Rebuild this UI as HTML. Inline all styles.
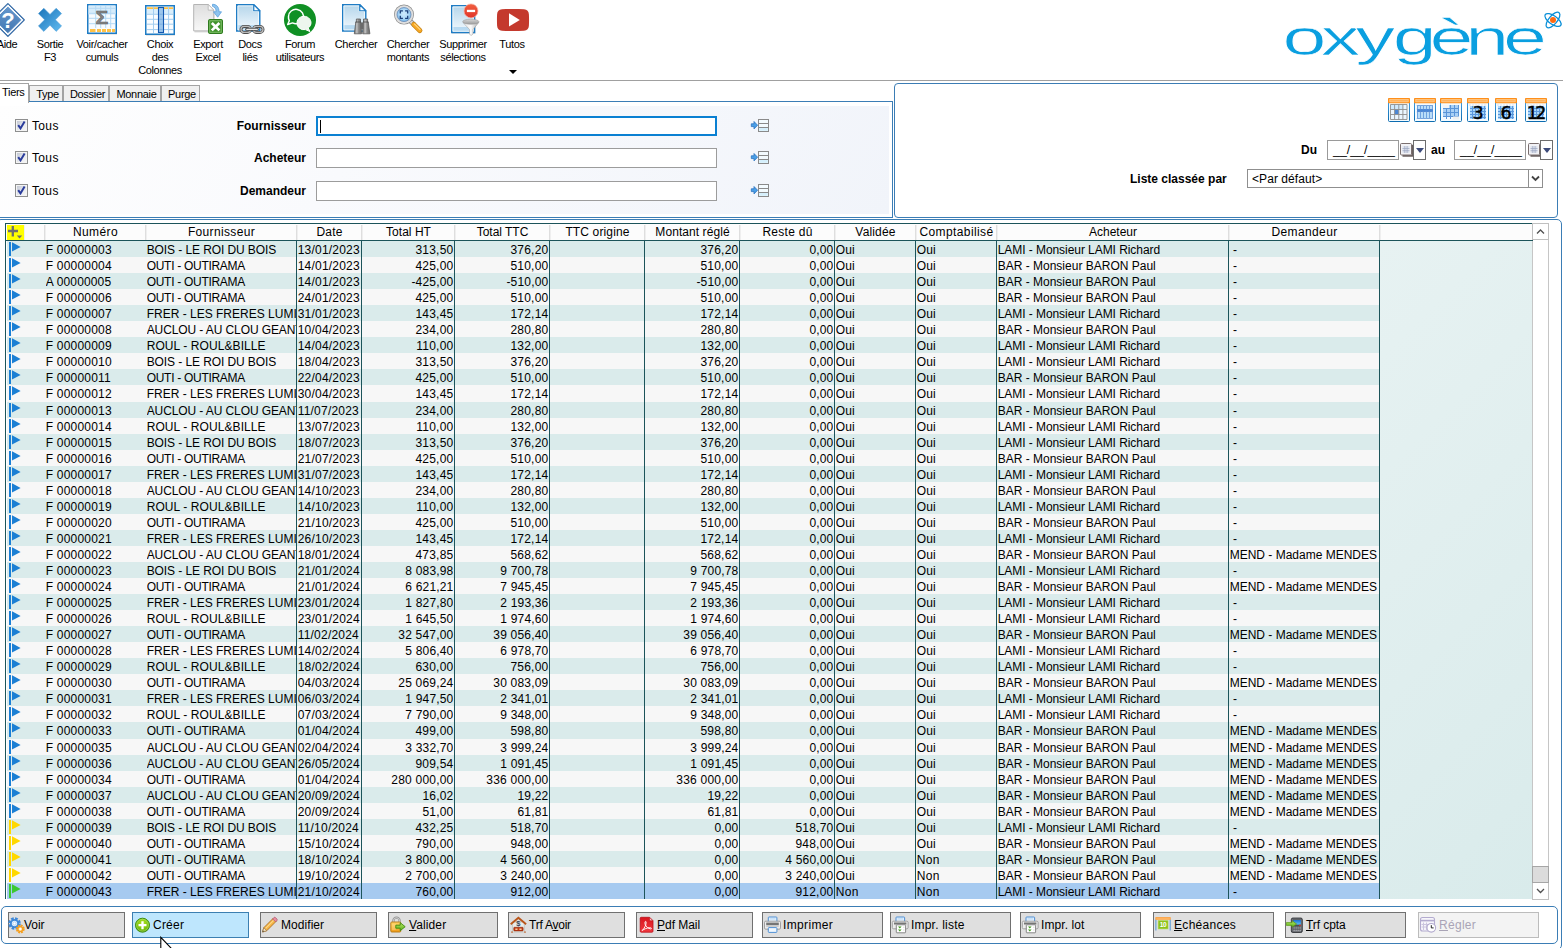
<!DOCTYPE html>
<html lang="fr">
<head>
<meta charset="utf-8">
<title>Oxygène - Factures fournisseurs</title>
<style>
*{box-sizing:border-box;margin:0;padding:0}
html,body{width:1563px;height:948px;overflow:hidden;background:#fff}
body{position:relative;font-family:"Liberation Sans",Arial,sans-serif;font-size:12px;color:#000;line-height:1}
.abs{position:absolute}
/* toolbar */
.tb{position:absolute;top:0;width:90px;text-align:center;font-size:11px;line-height:13px;letter-spacing:-0.35px;color:#000}
.tb svg{display:block;margin:0 auto}
.tb .lb{position:absolute;top:38px;left:0;width:90px}
.topline{position:absolute;left:0;top:80px;width:1563px;height:1px;background:#a0a0a0}
/* tabs */
.tab{position:absolute;top:85px;height:17px;border:1px solid #a3a3a3;border-bottom:none;background:#f0f0f0;font-size:11px;letter-spacing:-0.3px;text-align:center;line-height:17px;padding-left:3px}
.tabsel{position:absolute;left:-2px;top:83px;width:31px;height:20px;border:1px solid #a3a3a3;border-bottom:none;background:#fff;font-size:11px;letter-spacing:-0.3px;line-height:17px;padding-left:3px;z-index:3}
/* left panel */
#lp{position:absolute;left:-2px;top:101px;width:895px;height:117px;border:1px solid #3b7db5;background:#fff}
#lpi{position:absolute;left:0;top:4px;width:890px;height:108px;background:linear-gradient(125deg,#fefefe 0%,#f9fafd 40%,#f1f4fa 100%)}
.cb{position:absolute;left:15px;width:13px;height:13px;border:1px solid #8e8f8f;background:#f4f4f4}
.cb:before{content:"";position:absolute;left:1px;top:1px;width:9px;height:9px;background:linear-gradient(135deg,#c3c8d4,#e9ebef 60%,#f6f6f6)}
.cb svg{position:absolute;left:1px;top:1px}
.tous{position:absolute;left:32px;font-size:12px;letter-spacing:0.35px}
.flab{position:absolute;left:150px;width:156px;text-align:right;font-weight:bold;font-size:12px}
.inp{position:absolute;left:316px;width:401px;height:20px;border:1px solid #9c9c9c;background:#fff}
.inp.foc{border:2px solid #0a80d2}
.lk{position:absolute;left:750px}
/* right group */
#rg{position:absolute;left:894px;top:83px;width:664px;height:135px;border:1px solid #3b7db5;border-radius:4px;background:#fff}
.cal{position:absolute;top:98px;width:22px;height:24px}
.dinp{position:absolute;top:140px;width:72px;height:20px;border:1px solid #9a9a9a;background:#fff;font-size:12.4px;line-height:18px;padding-left:5px;white-space:pre}
.dbtn{position:absolute;top:140px;width:13px;height:20px;border:1px solid #6d6d6d;background:#fff}
.dbtn:after{content:"";position:absolute;left:1.5px;top:7px;border:4px solid transparent;border-top:5px solid #3c4a7a;border-bottom:none}
.bl{position:absolute;font-weight:bold;font-size:12px}
#sel{position:absolute;left:1247px;top:169px;width:296px;height:19px;border:1px solid #8f8f8f;background:#fff;font-size:12px;line-height:19px;padding-left:4px;letter-spacing:0.07px}
#sel i{position:absolute;right:0;top:0;width:14px;height:17px;border-left:1px solid #8f8f8f;background:#fff}
/* table group */
#tg{position:absolute;left:-4px;top:219px;width:1566px;height:731px;border:1px solid #3b7db5;border-radius:5px}
#grid{position:absolute;left:0;top:0;width:1563px;height:948px}
.gh{position:absolute;left:5px;top:223px;width:1528px;height:18px;border-top:1px solid #1c545a;border-bottom:1px solid #1c545a;background:#fcfcfc}
#gl{position:absolute;left:5px;top:223px;width:1px;height:676px;background:#1c545a}
.hc{position:absolute;top:224px;height:16px;line-height:16px;text-align:center;font-size:12px;white-space:nowrap;overflow:hidden}
.hs{position:absolute;top:225px;width:2px;height:15px;background:linear-gradient(90deg,#dedede 50%,#efefef 50%)}
.plus{position:absolute;left:7px;top:225px;width:17px;height:15px}
.r{position:absolute;left:7px;width:1373px;white-space:nowrap}
.r.o{background:#daebeb}
.r.e{background:#f7f7f7}
.r.s{background:#a6caf0}
.r .c{position:absolute;top:0;height:100%;line-height:16px;font-size:12px;overflow:hidden;margin-left:-7px;padding-top:1px}
.r .cr{text-align:right}
.r .fl{position:absolute;left:0;top:0}
.vl{position:absolute;top:241px;width:1px;height:658px;background:#1c545a}
#rest{position:absolute;left:1380px;top:241px;width:152px;height:658px;background:linear-gradient(135deg,#e7f2f2,#d9ebeb)}
/* scrollbar */
#sb{position:absolute;left:1532px;top:223px;width:17px;height:677px;background:#fff;border-left:1px solid #c6c6c6;border-right:1px solid #c6c6c6}
#sbu{position:absolute;left:1532px;top:223px;width:17px;height:17px;border:1px solid #c0c0c0;background:#fff}
#sbd{position:absolute;left:1532px;top:883px;width:17px;height:17px;border:1px solid #c0c0c0;border-top:none;background:#fff}
#sbt{position:absolute;left:1532px;top:866px;width:17px;height:17px;border:1px solid #a6a6a6;background:#dcdcdc}
/* buttons */
#bg{position:absolute;left:1px;top:906px;width:1557px;height:38px;border:1px solid #3b7db5;border-radius:5px;background:#fff}
.btn{position:absolute;top:912px;height:26px;border:1px solid #707070;background:#dfdfdf;font-size:12px;line-height:24px;white-space:nowrap}
.btn svg{position:absolute;left:0px;top:3px}
.btn span{position:absolute;top:0}
.btn.hot{background:#bee6fd;border-color:#3c7fb1}
.btn.dis{background:#f3f3f3;color:#a9a4b6;border-color:#bcbcbc}
u{text-decoration:underline}
</style>
</head>
<body>
<!-- TOOLBAR -->
<div id="toolbar">
<svg class="abs" style="left:0;top:0" width="560" height="80" viewBox="0 0 560 80">
<defs>
<linearGradient id="gb" x1="0" y1="0" x2="0" y2="1"><stop offset="0" stop-color="#6396cc"/><stop offset="1" stop-color="#4478b2"/></linearGradient>
<linearGradient id="gx" x1="0" y1="0" x2="1" y2="1"><stop offset="0" stop-color="#1b74b9"/><stop offset="1" stop-color="#62bbf0"/></linearGradient>
<linearGradient id="gp" x1="0" y1="0" x2="0" y2="1"><stop offset="0" stop-color="#b4d5ea"/><stop offset="0.78" stop-color="#e6f2fa"/><stop offset="0.79" stop-color="#b6d9f1"/><stop offset="1" stop-color="#bcdcf2"/></linearGradient>
<linearGradient id="gg" x1="0" y1="0" x2="0" y2="1"><stop offset="0" stop-color="#dedede"/><stop offset="1" stop-color="#f8f8f8"/></linearGradient>
<radialGradient id="gl2" cx="0.5" cy="0.45" r="0.6"><stop offset="0" stop-color="#cfeafc"/><stop offset="0.6" stop-color="#a9d6f7"/><stop offset="1" stop-color="#5fa6e0"/></radialGradient>
<linearGradient id="gbin" x1="0" y1="0" x2="1" y2="0"><stop offset="0" stop-color="#6e6e6e"/><stop offset="0.35" stop-color="#c4c4c4"/><stop offset="0.6" stop-color="#8a8a8a"/><stop offset="1" stop-color="#6a6a6a"/></linearGradient>
<linearGradient id="gfun" x1="0" y1="0" x2="1" y2="0"><stop offset="0" stop-color="#e8e8e8"/><stop offset="0.5" stop-color="#fafafa"/><stop offset="1" stop-color="#a8a8a8"/></linearGradient>
<linearGradient id="gfun2" x1="0" y1="0" x2="0" y2="1"><stop offset="0" stop-color="#d8d8d8"/><stop offset="1" stop-color="#9c9c9c"/></linearGradient>
<linearGradient id="gred" x1="0" y1="0" x2="0" y2="1"><stop offset="0" stop-color="#f2603f"/><stop offset="1" stop-color="#df352b"/></linearGradient>
</defs>
<!-- Aide -->
<g transform="translate(7.9,19.9)">
<path d="M0-16.2L16.200 0 0 16.2-16.200 0z" fill="#3f72ab" stroke="#3f72ab" stroke-width="1.5" stroke-linejoin="round"/>
<path d="M0-15L15 0 0 15-15 0z" fill="#f4f8fc" stroke="#f4f8fc" stroke-width="1" stroke-linejoin="round"/>
<path d="M0-12.800L12.800 0 0 12.800-12.800 0z" fill="url(#gb)" stroke="url(#gb)" stroke-width="1" stroke-linejoin="round"/>
<text x="0" y="8" text-anchor="middle" font-family="Liberation Sans, Arial, sans-serif" font-weight="bold" font-size="22" fill="#fff">?</text>
</g>
<!-- Sortie X -->
<g transform="translate(50,19.800)">
<path d="M-11.600-6.200L-6.200-11.600 0-5.400 6.200-11.600 11.600-6.200 5.400 0 11.600 6.200 6.200 11.600 0 5.400-6.200 11.600-11.600 6.200-5.400 0z" fill="url(#gx)" stroke="#4a9bd6" stroke-width="0.500" stroke-linejoin="round"/>
</g>
<!-- Voir/cacher cumuls -->
<g transform="translate(87,4)">
<rect x="1" y="1.500" width="29" height="29.500" fill="#d9d9d9" opacity="0.6"/>
<rect x="0.750" y="0.750" width="28.500" height="28.500" fill="#f7fbfe" stroke="#1f7cc4" stroke-width="1.500"/>
<rect x="1.500" y="1.500" width="27" height="9" fill="#d6ecfb"/>
<path d="M2 4.300h26M2 9.300h26M2 14.300h26M2 19.700h26M8.700 2v22M13.700 2v22M18.700 2v22M23.700 2v22" stroke="#b3d9f5" stroke-width="1" fill="none"/>
<path d="M3 25h5.500v3h-5.500zM10 25h4v3h-4zM15 25h4v3h-4zM20 25h4v3h-4zM25 25h3v3h-3z" fill="#ffc144"/>
<text x="14.800" y="20.300" text-anchor="middle" font-family="Liberation Sans, Arial, sans-serif" font-weight="bold" font-size="18.500" fill="#858585" stroke="#555" stroke-width="0.45" transform="translate(-2.2,0) scale(1.15,1)">Σ</text>
</g>
<!-- Choix des colonnes -->
<g transform="translate(145,5)">
<rect x="1" y="1.500" width="29" height="29.500" fill="#d9d9d9" opacity="0.6"/>
<rect x="0.750" y="0.750" width="28.500" height="28.500" fill="#fbfdff" stroke="#1f7cc4" stroke-width="1.500"/>
<rect x="2" y="4" width="26" height="5" fill="#d9eefc"/>
<path d="M2 9.300h26M2 14.300h26M2 19.200h26M2 24.600h26M8.500 2v26M23.600 2v26" stroke="#a3cdf0" stroke-width="1" fill="none"/>
<path d="M2 2.200h6v1.800h-6zM9 2.200h4v1.800h-4zM19 2.200h4v1.800h-4zM24 2.200h4v1.800h-4z" fill="#ffc144"/>
<rect x="13.500" y="2.500" width="5" height="25" fill="#9cc6ec" stroke="#1458b0" stroke-width="1.100"/>
<path d="M14.200 9.300h3.600M14.200 14.300h3.600M14.200 19.200h3.600M14.200 24.600h3.600" stroke="#7fb0e2" stroke-width="1"/>
</g>
<!-- Export Excel -->
<g transform="translate(193,4)">
<path d="M1.500 1.500h14l6 6v21h-20z" fill="#cfcfcf" opacity="0.700"/>
<path d="M0.700 0.500h14.500l5.600 5.600v20.800H0.700z" fill="url(#gg)" stroke="#b4b4b4" stroke-width="1"/>
<path d="M15.200 0.500v5.600h5.600z" fill="#fbfbfb" stroke="#b4b4b4" stroke-width="0.800"/>
<path d="M19.500 0.300c4 0 6.500 2.500 6.500 7.500h2.500l-3.800 5.400-4.200-5.400h2.600c0-3-1.200-4.800-3.600-5.500z" fill="#8ec3ee" stroke="#5a9fdc" stroke-width="0.800"/>
<rect x="15.500" y="15.500" width="14" height="14" rx="1.200" fill="#3f922b" stroke="#2f7a1f"/>
<rect x="16.800" y="16.800" width="11.400" height="11.400" fill="none" stroke="#8fcb7a" stroke-width="0.800"/>
<path d="M18.800 19l7.600 7.400M26.400 19l-7.600 7.400" stroke="#fff" stroke-width="2.700"/>
</g>
<!-- Docs liés -->
<g transform="translate(236,4)">
<path d="M0.750 0.750h17l6 6v20.300H0.750z" fill="url(#gp)" stroke="#1f7cc4" stroke-width="1.500"/>
<path d="M1.900 1.900h15.300v5.500h5.400v18.500H1.900z" fill="none" stroke="#f3f9fd" stroke-width="0.900"/>
<path d="M17.750 0.750v6h6z" fill="#fff" stroke="#1f7cc4" stroke-width="1.200" stroke-linejoin="round"/>
<g fill="none" stroke="#4e4e4e" stroke-width="3">
<rect x="5" y="22.400" width="9.500" height="6" rx="3"/>
<rect x="17.500" y="22.400" width="9.500" height="6" rx="3"/>
</g>
<g fill="none" stroke="#b9b9b9" stroke-width="1.300">
<rect x="5" y="22.400" width="9.500" height="6" rx="3"/>
<rect x="17.500" y="22.400" width="9.500" height="6" rx="3"/>
</g>
<path d="M10.500 25.400h11" stroke="#4e4e4e" stroke-width="2.800" stroke-linecap="round"/>
<path d="M10.800 25.400h10.400" stroke="#e6e6e6" stroke-width="1.100" stroke-linecap="round"/>
</g>
<!-- Forum -->
<g transform="translate(300,20)">
<circle r="16" fill="#109024"/>
<path d="M-11.500-3.500a7.500 7.200 0 1 1 4 6.400l-4.800 1.600 1.600-3.800a7 7 0 0 1-0.800-4.200z" fill="none" stroke="#fff" stroke-width="1.500" stroke-linejoin="round"/>
<path d="M-3 2.800a7 6.500 0 1 1 11.200 5.200l1.800 3.600-4.600-2a7 6.500 0 0 1-8.400-6.800z" fill="#edf6ee" stroke="#fff" stroke-width="1"/>
</g>
<!-- Chercher -->
<g transform="translate(342,4)">
<path d="M0.750 0.750h17l6 6v20.300H0.750z" fill="url(#gp)" stroke="#1f7cc4" stroke-width="1.500"/>
<path d="M1.900 1.900h15.300v5.500h5.400v18.500H1.900z" fill="none" stroke="#f3f9fd" stroke-width="0.900"/>
<path d="M17.750 0.750v6h6z" fill="#fff" stroke="#1f7cc4" stroke-width="1.200" stroke-linejoin="round"/>
<g stroke="#5a5a5a" stroke-width="0.800">
<path d="M14.400 15h4.100v3h0.600l0.400 11.800h-7.200l1.500-11.800h0.600z" fill="url(#gbin)"/>
<path d="M21.500 15h4.100v3h0.600l1.700 11.800h-7.200l0.200-11.800h0.600z" fill="url(#gbin)"/>
<rect x="18.500" y="19" width="3" height="6" fill="#6a6a6a" stroke="none"/>
<path d="M13.500 18h5.500M21 18h5.500" stroke="#4a4a4a"/>
</g>
</g>
<!-- Chercher montants -->
<g transform="translate(393,4)">
<path d="M17.300 17l4 4" stroke="#8e8e8e" stroke-width="4.600" stroke-linecap="butt"/>
<path d="M17.300 17l4 4" stroke="#dadada" stroke-width="3" stroke-linecap="butt"/>
<path d="M20.800 20.500l6 6" stroke="#c5841a" stroke-width="5.200" stroke-linecap="round"/>
<path d="M20.800 20.500l6 6" stroke="#f7a823" stroke-width="3.800" stroke-linecap="round"/>
<path d="M21.500 20l5.500 5.500" stroke="#ffd27a" stroke-width="1.100" stroke-linecap="round"/>
<circle cx="11" cy="10.600" r="10" fill="#8a8a8a"/>
<circle cx="11" cy="10.600" r="9.300" fill="#dedede"/>
<circle cx="11" cy="10.600" r="7" fill="url(#gl2)" stroke="#6f93bd" stroke-width="0.900"/>
<path d="M7.300 9.400v-2.600h2.600M12.100 6.800h2.600v2.600M14.700 11.800v2.600h-2.600M9.900 14.400h-2.600v-2.600" fill="none" stroke="#1d3f78" stroke-width="1.300"/>
</g>
<!-- Supprimer sélections -->
<g transform="translate(451,5)">
<rect x="1" y="1.500" width="23.500" height="27.500" fill="#d9d9d9" opacity="0.600"/>
<path d="M0.750 0.750h22.800v26.700H0.750z" fill="url(#gp)" stroke="#1f7cc4" stroke-width="1.500"/>
<path d="M1.900 1.900h20.500v24.400H1.900z" fill="none" stroke="#f3f9fd" stroke-width="0.900"/>
<path d="M12 17.500c3 1 12.800 1 15.800 0l-5.800 7v4.500l-1.300 1.200h-1.200l-1-1.200v-4.500z" fill="url(#gfun)" stroke="#9a9a9a" stroke-width="0.500"/>
<ellipse cx="19.800" cy="16.700" rx="8.100" ry="2.500" fill="url(#gfun2)" stroke="#9a9a9a" stroke-width="0.600"/>
<circle cx="20" cy="5.900" r="7" fill="url(#gred)" stroke="#f8b4a8" stroke-width="0.700"/>
<rect x="15.900" y="4.800" width="8.200" height="2.300" fill="#fff"/>
</g>
<!-- Tutos -->
<g transform="translate(497,9)">
<path d="M5 0.300c7-0.500 15-0.500 22 0c3.200 0.300 4.700 2 4.900 5c0.200 3.600 0.200 7.800 0 11.400c-0.200 3-1.700 4.700-4.900 5c-7 0.500-15 0.500-22 0c-3.200-0.300-4.700-2-4.900-5c-0.200-3.600-0.200-7.800 0-11.400c0.200-3 1.700-4.700 4.900-5z" fill="#c4392d"/>
<path d="M12 4.200l10.800 6.700-10.800 6.500z" fill="#fff"/>
</g>
<path d="M509 70h8l-4 4z" fill="#000"/>
</svg>
<div class="tb" style="left:-38px"><div class="lb">Aide</div></div>
<div class="tb" style="left:5px"><div class="lb">Sortie<br>F3</div></div>
<div class="tb" style="left:57px"><div class="lb">Voir/cacher<br>cumuls</div></div>
<div class="tb" style="left:115px"><div class="lb">Choix<br>des<br>Colonnes</div></div>
<div class="tb" style="left:163px"><div class="lb">Export<br>Excel</div></div>
<div class="tb" style="left:205px"><div class="lb">Docs<br>liés</div></div>
<div class="tb" style="left:255px"><div class="lb">Forum<br>utilisateurs</div></div>
<div class="tb" style="left:311px"><div class="lb">Chercher</div></div>
<div class="tb" style="left:363px"><div class="lb">Chercher<br>montants</div></div>
<div class="tb" style="left:418px"><div class="lb">Supprimer<br>sélections</div></div>
<div class="tb" style="left:467px"><div class="lb">Tutos</div></div>
<!-- logo -->
<svg class="abs" style="left:1270px;top:0" width="293" height="80" viewBox="0 0 293 80">
<text x="0" y="0" transform="translate(12.5,55) scale(1.58,1)" dx="0 0 0.6 2.2 -1 -1.6 -0.3" letter-spacing="-3.6" font-family="Liberation Sans, Arial, sans-serif" font-size="50" fill="#0a9fe0" stroke="#fff" stroke-width="0.7">oxygène</text>
<g transform="translate(283,20)" fill="none" stroke="#0a8fd8" stroke-width="1.300">
<ellipse rx="9.500" ry="4.200" transform="rotate(35)"/>
<ellipse rx="9.500" ry="4.200" transform="rotate(-50)"/>
<circle r="3" fill="#ff6a13" stroke="none"/>
</g>
</svg>
</div>
<div class="topline"></div>
<!-- TABS -->
<div class="tabsel">Tiers</div>
<div class="tab" style="left:29px;width:34px">Type</div>
<div class="tab" style="left:63px;width:46px">Dossier</div>
<div class="tab" style="left:109px;width:52px">Monnaie</div>
<div class="tab" style="left:161px;width:39px">Purge</div>
<!-- LEFT PANEL -->
<div id="lp"><div id="lpi"></div></div>
<div class="cb" style="top:119px"><svg width="9" height="9" viewBox="0 0 9 9"><path d="M1.200 4.200l2.300 3.200L7.600 0.600" fill="none" stroke="#2a3c9c" stroke-width="2"/></svg></div>
<div class="cb" style="top:151px"><svg width="9" height="9" viewBox="0 0 9 9"><path d="M1.200 4.200l2.300 3.200L7.600 0.600" fill="none" stroke="#2a3c9c" stroke-width="2"/></svg></div>
<div class="cb" style="top:184px"><svg width="9" height="9" viewBox="0 0 9 9"><path d="M1.200 4.200l2.300 3.200L7.600 0.600" fill="none" stroke="#2a3c9c" stroke-width="2"/></svg></div>
<div class="tous" style="top:120px">Tous</div>
<div class="tous" style="top:152px">Tous</div>
<div class="tous" style="top:185px">Tous</div>
<div class="flab" style="top:120px">Fournisseur</div>
<div class="flab" style="top:152px">Acheteur</div>
<div class="flab" style="top:185px">Demandeur</div>
<div class="inp foc" style="top:116px"><div style="position:absolute;left:2px;top:2px;width:1px;height:13px;background:#000"></div></div>
<div class="inp" style="top:148px"></div>
<div class="inp" style="top:181px"></div>
<svg class="lk" style="top:119px" width="20" height="14" viewBox="0 0 20 14"><use href="#lkicon"/></svg>
<svg class="lk" style="top:151px" width="20" height="14" viewBox="0 0 20 14"><use href="#lkicon"/></svg>
<svg class="lk" style="top:184px" width="20" height="14" viewBox="0 0 20 14"><use href="#lkicon"/></svg>
<svg width="0" height="0" style="position:absolute"><defs>
<g id="lkicon"><rect x="8.5" y="0.5" width="10" height="12" fill="#f4fbff" stroke="#8a8a8a"/><rect x="9.2" y="8.700" width="8.6" height="3.100" fill="#d5effc"/><path d="M9 4.500h9M9 8.500h9" stroke="#8a8a8a" stroke-width="1"/><path d="M1.300 4.800h2.700v-2.300l3.600 3.700-3.600 3.700v-2.300h-2.700z" fill="#4b9fe6" stroke="#2a72c0" stroke-width="0.800" stroke-linejoin="round"/></g>
<g id="calbase"><rect x="0.500" y="0.500" width="21" height="23" rx="1" fill="#f4fbff" stroke="url(#calb)"/><rect x="0" y="0" width="22" height="5.200" rx="1" fill="#ff8f1a"/><rect x="1.800" y="1.500" width="18.400" height="2.400" fill="#ffb25c" stroke="#ffd9a8" stroke-width="0.600"/></g><linearGradient id="calb" x1="0" y1="0" x2="0" y2="1"><stop offset="0" stop-color="#4aa3e6"/><stop offset="1" stop-color="#0c6cb0"/></linearGradient>
<g id="calgrid"><rect x="3" y="8" width="16" height="13" fill="#a9d6fa"/><path d="M3 10.500h16M3 13.500h16M3 16.500h16M3 19.500h16M5.500 8v13M8.500 8v13M11.500 8v13M14.500 8v13M17.500 8v13" stroke="#5b97dc" stroke-width="1" fill="none"/><path d="M2.500 7h17" stroke="#a9a9c9" stroke-width="0.600" stroke-dasharray="1 2"/></g>
<g id="calsm"><path d="M2.500 14.800h10v-11" fill="none" stroke="#6a6060" stroke-width="1.800"/><rect x="0.500" y="2.500" width="11" height="11.500" rx="1" fill="#f2f2f6" stroke="#7a6f6f"/><rect x="2.500" y="5" width="7" height="7" fill="#dfe3ee"/><path d="M2.500 7.500h7M2.500 9.700h7M4.800 5v7M7.100 5v7" stroke="#9aa3bf" stroke-width="0.700"/></g>
</defs></svg>
<!-- RIGHT GROUP -->
<div id="rg"></div>
<svg class="cal" style="left:1388px" viewBox="0 0 22 24"><use href="#calbase"/><rect x="2.500" y="6.500" width="16.500" height="15" fill="#eaf6ff"/><rect x="2.500" y="6.500" width="12.500" height="5" fill="#cfe9fd"/><rect x="6.600" y="11.500" width="4.200" height="5" fill="#4a87d6"/><path d="M2.500 6.500h16.500v15h-16.500zM2.500 11.500h16.500M2.500 16.500h16.500M6.600 6.500v15M10.800 6.500v15M14.900 6.500v15" stroke="#8e8e8e" stroke-width="0.900" fill="none"/></svg>
<svg class="cal" style="left:1414px" viewBox="0 0 22 24"><use href="#calbase"/><rect x="3" y="7" width="16" height="14" fill="#6fa3df"/><path d="M5 8v12M8 8v12M11 8v12M14 8v12M17 8v12" stroke="#cdebff" stroke-width="1.600"/><rect x="3" y="11" width="16" height="3" fill="#4a87d6"/><path d="M2.500 7.500h17M2.500 11h17M2.500 14h17M2.500 20.500h17" stroke="#a9a9c9" stroke-width="0.500" stroke-dasharray="1 2"/></svg>
<svg class="cal" style="left:1440px" viewBox="0 0 22 24"><use href="#calbase"/><rect x="3" y="10" width="16" height="9" fill="#a9d0f5"/><rect x="9" y="7" width="10" height="4" fill="#a9d0f5"/><path d="M3 10.500h16M3 14.500h16M3 18.500h16M6.500 7v14M10.500 7v14M14.500 7v14M18.500 7v14" stroke="#5b95d8" stroke-width="1" fill="none"/><rect x="3" y="7" width="6" height="3" fill="#f4f4f4"/><rect x="13" y="18.500" width="6" height="3" fill="#f0f0f0"/></svg>
<svg class="cal" style="left:1467px" viewBox="0 0 22 24"><use href="#calbase"/><use href="#calgrid"/><text x="11" y="20.800" text-anchor="middle" font-family="DejaVu Sans, Liberation Sans, sans-serif" font-size="17.500" fill="#000" stroke="#000" stroke-width="0.450">3</text></svg>
<svg class="cal" style="left:1495px" viewBox="0 0 22 24"><use href="#calbase"/><use href="#calgrid"/><text x="11" y="20.800" text-anchor="middle" font-family="DejaVu Sans, Liberation Sans, sans-serif" font-size="17.500" fill="#000" stroke="#000" stroke-width="0.450">6</text></svg>
<svg class="cal" style="left:1525px" viewBox="0 0 22 24"><use href="#calbase"/><use href="#calgrid"/><text x="10.300" y="20.800" text-anchor="middle" font-family="DejaVu Sans, Liberation Sans, sans-serif" font-size="17.500" letter-spacing="-2.600" fill="#000" stroke="#000" stroke-width="0.400">12</text></svg>
<div class="bl" style="left:1301px;top:144px">Du</div>
<div class="dinp" style="left:1327px">__/__/____</div>
<svg class="abs" style="left:1400px;top:141px" width="14" height="18" viewBox="0 0 14 18"><use href="#calsm"/></svg>
<div class="dbtn" style="left:1413px"></div>
<div class="bl" style="left:1431px;top:144px">au</div>
<div class="dinp" style="left:1454px">__/__/____</div>
<svg class="abs" style="left:1528px;top:141px" width="14" height="18" viewBox="0 0 14 18"><use href="#calsm"/></svg>
<div class="dbtn" style="left:1540px"></div>
<div class="bl" style="left:1130px;top:173px">Liste classée par</div>
<div id="sel">&lt;Par défaut&gt;<i><svg width="13" height="17" viewBox="0 0 13 17"><path d="M3 6.500l3.500 3.500L10 6.500" fill="none" stroke="#444" stroke-width="1.800"/></svg></i></div>
<!-- TABLE GROUP -->
<div id="tg"></div>
<div id="rest"></div>
<div id="sb"></div>
<div id="grid">
<div class="gh"></div>
<div class="hc" style="left:46px;width:99px;letter-spacing:0.41px">Numéro</div>
<div class="hc" style="left:147px;width:149px;letter-spacing:0.35px">Fournisseur</div>
<div class="hc" style="left:298px;width:63px;letter-spacing:0.18px">Date</div>
<div class="hc" style="left:363px;width:91px;letter-spacing:0.02px">Total HT</div>
<div class="hc" style="left:456px;width:93px;letter-spacing:-0.02px">Total TTC</div>
<div class="hc" style="left:551px;width:93px;letter-spacing:0.14px">TTC origine</div>
<div class="hc" style="left:646px;width:93px;letter-spacing:0.07px">Montant réglé</div>
<div class="hc" style="left:741px;width:93px;letter-spacing:0.27px">Reste dû</div>
<div class="hc" style="left:836px;width:79px;letter-spacing:0.16px">Validée</div>
<div class="hc" style="left:917px;width:79px;letter-spacing:0.40px">Comptabilisé</div>
<div class="hc" style="left:998px;width:230px;letter-spacing:0.01px">Acheteur</div>
<div class="hc" style="left:1230px;width:149px;letter-spacing:0.39px">Demandeur</div>
<div class="hs" style="left:44px"></div>
<div class="hs" style="left:145px"></div>
<div class="hs" style="left:296px"></div>
<div class="hs" style="left:361px"></div>
<div class="hs" style="left:454px"></div>
<div class="hs" style="left:549px"></div>
<div class="hs" style="left:644px"></div>
<div class="hs" style="left:739px"></div>
<div class="hs" style="left:834px"></div>
<div class="hs" style="left:915px"></div>
<div class="hs" style="left:996px"></div>
<div class="hs" style="left:1228px"></div>
<div class="hs" style="left:1379px"></div>
<div class="hs" style="left:24px;width:1px"></div>
<div class="plus"><svg width="17" height="15" viewBox="0 0 17 15"><rect width="17" height="15" fill="#ffff00"/><path d="M1 6h10M5.800 1v10.500" stroke="#6e6e6e" stroke-width="2.300" fill="none"/><path d="M9.800 10.500h5.400l-2.700 2.900z" fill="#6e6e6e"/></svg></div>
<div class="r o" style="top:241px;height:16px">
<svg class="fl" width="14" height="16" viewBox="0 0 14 16"><rect x="2" y="1" width="2" height="14" fill="#1b7fd4"/><path d="M5 1.2L13.6 6 5 10.6z" fill="#1b7fd4"/></svg>
<span class="c" style="left:45.7px;width:99.3px;letter-spacing:0.21px">F 00000003</span>
<span class="c" style="left:146.7px;width:149.3px;letter-spacing:-0.09px">BOIS - LE ROI DU BOIS</span>
<span class="c" style="left:297.7px;width:63.3px;letter-spacing:0.21px">13/01/2023</span>
<span class="c cr" style="left:362px;width:91.54px;letter-spacing:0.24px">313,50</span>
<span class="c cr" style="left:455px;width:93.54px;letter-spacing:0.24px">376,20</span>
<span class="c cr" style="left:645px;width:93.54px;letter-spacing:0.24px">376,20</span>
<span class="c cr" style="left:740px;width:93.48px;letter-spacing:0.18px">0,00</span>
<span class="c" style="left:835.7px;width:79.3px;letter-spacing:0.13px">Oui</span>
<span class="c" style="left:916.7px;width:79.3px;letter-spacing:0.13px">Oui</span>
<span class="c" style="left:997.7px;width:230.3px;letter-spacing:-0.06px">LAMI - Monsieur LAMI Richard</span>
<span class="c" style="left:1233.0px;width:146.0px">-</span>
</div>
<div class="r e" style="top:257px;height:16px">
<svg class="fl" width="14" height="16" viewBox="0 0 14 16"><rect x="2" y="1" width="2" height="14" fill="#1b7fd4"/><path d="M5 1.2L13.6 6 5 10.6z" fill="#1b7fd4"/></svg>
<span class="c" style="left:45.7px;width:99.3px;letter-spacing:0.21px">F 00000004</span>
<span class="c" style="left:146.7px;width:149.3px;letter-spacing:-0.29px">OUTI - OUTIRAMA</span>
<span class="c" style="left:297.7px;width:63.3px;letter-spacing:0.21px">14/01/2023</span>
<span class="c cr" style="left:362px;width:91.54px;letter-spacing:0.24px">425,00</span>
<span class="c cr" style="left:455px;width:93.54px;letter-spacing:0.24px">510,00</span>
<span class="c cr" style="left:645px;width:93.54px;letter-spacing:0.24px">510,00</span>
<span class="c cr" style="left:740px;width:93.48px;letter-spacing:0.18px">0,00</span>
<span class="c" style="left:835.7px;width:79.3px;letter-spacing:0.13px">Oui</span>
<span class="c" style="left:916.7px;width:79.3px;letter-spacing:0.13px">Oui</span>
<span class="c" style="left:997.7px;width:230.3px">BAR - Monsieur BARON Paul</span>
<span class="c" style="left:1233.0px;width:146.0px">-</span>
</div>
<div class="r o" style="top:273px;height:16px">
<svg class="fl" width="14" height="16" viewBox="0 0 14 16"><rect x="2" y="1" width="2" height="14" fill="#1b7fd4"/><path d="M5 1.2L13.6 6 5 10.6z" fill="#1b7fd4"/></svg>
<span class="c" style="left:45.7px;width:99.3px;letter-spacing:0.15px">A 00000005</span>
<span class="c" style="left:146.7px;width:149.3px;letter-spacing:-0.29px">OUTI - OUTIRAMA</span>
<span class="c" style="left:297.7px;width:63.3px;letter-spacing:0.21px">14/01/2023</span>
<span class="c cr" style="left:362px;width:91.50px;letter-spacing:0.20px">-425,00</span>
<span class="c cr" style="left:455px;width:93.50px;letter-spacing:0.20px">-510,00</span>
<span class="c cr" style="left:645px;width:93.50px;letter-spacing:0.20px">-510,00</span>
<span class="c cr" style="left:740px;width:93.48px;letter-spacing:0.18px">0,00</span>
<span class="c" style="left:835.7px;width:79.3px;letter-spacing:0.13px">Oui</span>
<span class="c" style="left:916.7px;width:79.3px;letter-spacing:0.13px">Oui</span>
<span class="c" style="left:997.7px;width:230.3px">BAR - Monsieur BARON Paul</span>
<span class="c" style="left:1233.0px;width:146.0px">-</span>
</div>
<div class="r e" style="top:289px;height:16px">
<svg class="fl" width="14" height="16" viewBox="0 0 14 16"><rect x="2" y="1" width="2" height="14" fill="#1b7fd4"/><path d="M5 1.2L13.6 6 5 10.6z" fill="#1b7fd4"/></svg>
<span class="c" style="left:45.7px;width:99.3px;letter-spacing:0.21px">F 00000006</span>
<span class="c" style="left:146.7px;width:149.3px;letter-spacing:-0.29px">OUTI - OUTIRAMA</span>
<span class="c" style="left:297.7px;width:63.3px;letter-spacing:0.21px">24/01/2023</span>
<span class="c cr" style="left:362px;width:91.54px;letter-spacing:0.24px">425,00</span>
<span class="c cr" style="left:455px;width:93.54px;letter-spacing:0.24px">510,00</span>
<span class="c cr" style="left:645px;width:93.54px;letter-spacing:0.24px">510,00</span>
<span class="c cr" style="left:740px;width:93.48px;letter-spacing:0.18px">0,00</span>
<span class="c" style="left:835.7px;width:79.3px;letter-spacing:0.13px">Oui</span>
<span class="c" style="left:916.7px;width:79.3px;letter-spacing:0.13px">Oui</span>
<span class="c" style="left:997.7px;width:230.3px">BAR - Monsieur BARON Paul</span>
<span class="c" style="left:1233.0px;width:146.0px">-</span>
</div>
<div class="r o" style="top:305px;height:16px">
<svg class="fl" width="14" height="16" viewBox="0 0 14 16"><rect x="2" y="1" width="2" height="14" fill="#1b7fd4"/><path d="M5 1.2L13.6 6 5 10.6z" fill="#1b7fd4"/></svg>
<span class="c" style="left:45.7px;width:99.3px;letter-spacing:0.21px">F 00000007</span>
<span class="c" style="left:146.7px;width:149.3px">FRER - LES FRERES LUMIERE</span>
<span class="c" style="left:297.7px;width:63.3px;letter-spacing:0.21px">31/01/2023</span>
<span class="c cr" style="left:362px;width:91.54px;letter-spacing:0.24px">143,45</span>
<span class="c cr" style="left:455px;width:93.54px;letter-spacing:0.24px">172,14</span>
<span class="c cr" style="left:645px;width:93.54px;letter-spacing:0.24px">172,14</span>
<span class="c cr" style="left:740px;width:93.48px;letter-spacing:0.18px">0,00</span>
<span class="c" style="left:835.7px;width:79.3px;letter-spacing:0.13px">Oui</span>
<span class="c" style="left:916.7px;width:79.3px;letter-spacing:0.13px">Oui</span>
<span class="c" style="left:997.7px;width:230.3px;letter-spacing:-0.06px">LAMI - Monsieur LAMI Richard</span>
<span class="c" style="left:1233.0px;width:146.0px">-</span>
</div>
<div class="r e" style="top:321px;height:16px">
<svg class="fl" width="14" height="16" viewBox="0 0 14 16"><rect x="2" y="1" width="2" height="14" fill="#1b7fd4"/><path d="M5 1.2L13.6 6 5 10.6z" fill="#1b7fd4"/></svg>
<span class="c" style="left:45.7px;width:99.3px;letter-spacing:0.21px">F 00000008</span>
<span class="c" style="left:146.7px;width:149.3px;letter-spacing:-0.10px">AUCLOU - AU CLOU GEANT</span>
<span class="c" style="left:297.7px;width:63.3px;letter-spacing:0.21px">10/04/2023</span>
<span class="c cr" style="left:362px;width:91.54px;letter-spacing:0.24px">234,00</span>
<span class="c cr" style="left:455px;width:93.54px;letter-spacing:0.24px">280,80</span>
<span class="c cr" style="left:645px;width:93.54px;letter-spacing:0.24px">280,80</span>
<span class="c cr" style="left:740px;width:93.48px;letter-spacing:0.18px">0,00</span>
<span class="c" style="left:835.7px;width:79.3px;letter-spacing:0.13px">Oui</span>
<span class="c" style="left:916.7px;width:79.3px;letter-spacing:0.13px">Oui</span>
<span class="c" style="left:997.7px;width:230.3px">BAR - Monsieur BARON Paul</span>
<span class="c" style="left:1233.0px;width:146.0px">-</span>
</div>
<div class="r o" style="top:337px;height:16px">
<svg class="fl" width="14" height="16" viewBox="0 0 14 16"><rect x="2" y="1" width="2" height="14" fill="#1b7fd4"/><path d="M5 1.2L13.6 6 5 10.6z" fill="#1b7fd4"/></svg>
<span class="c" style="left:45.7px;width:99.3px;letter-spacing:0.21px">F 00000009</span>
<span class="c" style="left:146.7px;width:149.3px;letter-spacing:0.08px">ROUL - ROUL&amp;BILLE</span>
<span class="c" style="left:297.7px;width:63.3px;letter-spacing:0.21px">14/04/2023</span>
<span class="c cr" style="left:362px;width:91.54px;letter-spacing:0.24px">110,00</span>
<span class="c cr" style="left:455px;width:93.54px;letter-spacing:0.24px">132,00</span>
<span class="c cr" style="left:645px;width:93.54px;letter-spacing:0.24px">132,00</span>
<span class="c cr" style="left:740px;width:93.48px;letter-spacing:0.18px">0,00</span>
<span class="c" style="left:835.7px;width:79.3px;letter-spacing:0.13px">Oui</span>
<span class="c" style="left:916.7px;width:79.3px;letter-spacing:0.13px">Oui</span>
<span class="c" style="left:997.7px;width:230.3px;letter-spacing:-0.06px">LAMI - Monsieur LAMI Richard</span>
<span class="c" style="left:1233.0px;width:146.0px">-</span>
</div>
<div class="r e" style="top:353px;height:16px">
<svg class="fl" width="14" height="16" viewBox="0 0 14 16"><rect x="2" y="1" width="2" height="14" fill="#1b7fd4"/><path d="M5 1.2L13.6 6 5 10.6z" fill="#1b7fd4"/></svg>
<span class="c" style="left:45.7px;width:99.3px;letter-spacing:0.21px">F 00000010</span>
<span class="c" style="left:146.7px;width:149.3px;letter-spacing:-0.09px">BOIS - LE ROI DU BOIS</span>
<span class="c" style="left:297.7px;width:63.3px;letter-spacing:0.21px">18/04/2023</span>
<span class="c cr" style="left:362px;width:91.54px;letter-spacing:0.24px">313,50</span>
<span class="c cr" style="left:455px;width:93.54px;letter-spacing:0.24px">376,20</span>
<span class="c cr" style="left:645px;width:93.54px;letter-spacing:0.24px">376,20</span>
<span class="c cr" style="left:740px;width:93.48px;letter-spacing:0.18px">0,00</span>
<span class="c" style="left:835.7px;width:79.3px;letter-spacing:0.13px">Oui</span>
<span class="c" style="left:916.7px;width:79.3px;letter-spacing:0.13px">Oui</span>
<span class="c" style="left:997.7px;width:230.3px;letter-spacing:-0.06px">LAMI - Monsieur LAMI Richard</span>
<span class="c" style="left:1233.0px;width:146.0px">-</span>
</div>
<div class="r o" style="top:369px;height:16px">
<svg class="fl" width="14" height="16" viewBox="0 0 14 16"><rect x="2" y="1" width="2" height="14" fill="#1b7fd4"/><path d="M5 1.2L13.6 6 5 10.6z" fill="#1b7fd4"/></svg>
<span class="c" style="left:45.7px;width:99.3px;letter-spacing:0.21px">F 00000011</span>
<span class="c" style="left:146.7px;width:149.3px;letter-spacing:-0.29px">OUTI - OUTIRAMA</span>
<span class="c" style="left:297.7px;width:63.3px;letter-spacing:0.21px">22/04/2023</span>
<span class="c cr" style="left:362px;width:91.54px;letter-spacing:0.24px">425,00</span>
<span class="c cr" style="left:455px;width:93.54px;letter-spacing:0.24px">510,00</span>
<span class="c cr" style="left:645px;width:93.54px;letter-spacing:0.24px">510,00</span>
<span class="c cr" style="left:740px;width:93.48px;letter-spacing:0.18px">0,00</span>
<span class="c" style="left:835.7px;width:79.3px;letter-spacing:0.13px">Oui</span>
<span class="c" style="left:916.7px;width:79.3px;letter-spacing:0.13px">Oui</span>
<span class="c" style="left:997.7px;width:230.3px">BAR - Monsieur BARON Paul</span>
<span class="c" style="left:1233.0px;width:146.0px">-</span>
</div>
<div class="r e" style="top:385px;height:17px">
<svg class="fl" width="14" height="16" viewBox="0 0 14 16"><rect x="2" y="1" width="2" height="14" fill="#1b7fd4"/><path d="M5 1.2L13.6 6 5 10.6z" fill="#1b7fd4"/></svg>
<span class="c" style="left:45.7px;width:99.3px;letter-spacing:0.21px">F 00000012</span>
<span class="c" style="left:146.7px;width:149.3px">FRER - LES FRERES LUMIERE</span>
<span class="c" style="left:297.7px;width:63.3px;letter-spacing:0.21px">30/04/2023</span>
<span class="c cr" style="left:362px;width:91.54px;letter-spacing:0.24px">143,45</span>
<span class="c cr" style="left:455px;width:93.54px;letter-spacing:0.24px">172,14</span>
<span class="c cr" style="left:645px;width:93.54px;letter-spacing:0.24px">172,14</span>
<span class="c cr" style="left:740px;width:93.48px;letter-spacing:0.18px">0,00</span>
<span class="c" style="left:835.7px;width:79.3px;letter-spacing:0.13px">Oui</span>
<span class="c" style="left:916.7px;width:79.3px;letter-spacing:0.13px">Oui</span>
<span class="c" style="left:997.7px;width:230.3px;letter-spacing:-0.06px">LAMI - Monsieur LAMI Richard</span>
<span class="c" style="left:1233.0px;width:146.0px">-</span>
</div>
<div class="r o" style="top:402px;height:16px">
<svg class="fl" width="14" height="16" viewBox="0 0 14 16"><rect x="2" y="1" width="2" height="14" fill="#1b7fd4"/><path d="M5 1.2L13.6 6 5 10.6z" fill="#1b7fd4"/></svg>
<span class="c" style="left:45.7px;width:99.3px;letter-spacing:0.21px">F 00000013</span>
<span class="c" style="left:146.7px;width:149.3px;letter-spacing:-0.10px">AUCLOU - AU CLOU GEANT</span>
<span class="c" style="left:297.7px;width:63.3px;letter-spacing:0.21px">11/07/2023</span>
<span class="c cr" style="left:362px;width:91.54px;letter-spacing:0.24px">234,00</span>
<span class="c cr" style="left:455px;width:93.54px;letter-spacing:0.24px">280,80</span>
<span class="c cr" style="left:645px;width:93.54px;letter-spacing:0.24px">280,80</span>
<span class="c cr" style="left:740px;width:93.48px;letter-spacing:0.18px">0,00</span>
<span class="c" style="left:835.7px;width:79.3px;letter-spacing:0.13px">Oui</span>
<span class="c" style="left:916.7px;width:79.3px;letter-spacing:0.13px">Oui</span>
<span class="c" style="left:997.7px;width:230.3px">BAR - Monsieur BARON Paul</span>
<span class="c" style="left:1233.0px;width:146.0px">-</span>
</div>
<div class="r e" style="top:418px;height:16px">
<svg class="fl" width="14" height="16" viewBox="0 0 14 16"><rect x="2" y="1" width="2" height="14" fill="#1b7fd4"/><path d="M5 1.2L13.6 6 5 10.6z" fill="#1b7fd4"/></svg>
<span class="c" style="left:45.7px;width:99.3px;letter-spacing:0.21px">F 00000014</span>
<span class="c" style="left:146.7px;width:149.3px;letter-spacing:0.08px">ROUL - ROUL&amp;BILLE</span>
<span class="c" style="left:297.7px;width:63.3px;letter-spacing:0.21px">13/07/2023</span>
<span class="c cr" style="left:362px;width:91.54px;letter-spacing:0.24px">110,00</span>
<span class="c cr" style="left:455px;width:93.54px;letter-spacing:0.24px">132,00</span>
<span class="c cr" style="left:645px;width:93.54px;letter-spacing:0.24px">132,00</span>
<span class="c cr" style="left:740px;width:93.48px;letter-spacing:0.18px">0,00</span>
<span class="c" style="left:835.7px;width:79.3px;letter-spacing:0.13px">Oui</span>
<span class="c" style="left:916.7px;width:79.3px;letter-spacing:0.13px">Oui</span>
<span class="c" style="left:997.7px;width:230.3px;letter-spacing:-0.06px">LAMI - Monsieur LAMI Richard</span>
<span class="c" style="left:1233.0px;width:146.0px">-</span>
</div>
<div class="r o" style="top:434px;height:16px">
<svg class="fl" width="14" height="16" viewBox="0 0 14 16"><rect x="2" y="1" width="2" height="14" fill="#1b7fd4"/><path d="M5 1.2L13.6 6 5 10.6z" fill="#1b7fd4"/></svg>
<span class="c" style="left:45.7px;width:99.3px;letter-spacing:0.21px">F 00000015</span>
<span class="c" style="left:146.7px;width:149.3px;letter-spacing:-0.09px">BOIS - LE ROI DU BOIS</span>
<span class="c" style="left:297.7px;width:63.3px;letter-spacing:0.21px">18/07/2023</span>
<span class="c cr" style="left:362px;width:91.54px;letter-spacing:0.24px">313,50</span>
<span class="c cr" style="left:455px;width:93.54px;letter-spacing:0.24px">376,20</span>
<span class="c cr" style="left:645px;width:93.54px;letter-spacing:0.24px">376,20</span>
<span class="c cr" style="left:740px;width:93.48px;letter-spacing:0.18px">0,00</span>
<span class="c" style="left:835.7px;width:79.3px;letter-spacing:0.13px">Oui</span>
<span class="c" style="left:916.7px;width:79.3px;letter-spacing:0.13px">Oui</span>
<span class="c" style="left:997.7px;width:230.3px;letter-spacing:-0.06px">LAMI - Monsieur LAMI Richard</span>
<span class="c" style="left:1233.0px;width:146.0px">-</span>
</div>
<div class="r e" style="top:450px;height:16px">
<svg class="fl" width="14" height="16" viewBox="0 0 14 16"><rect x="2" y="1" width="2" height="14" fill="#1b7fd4"/><path d="M5 1.2L13.6 6 5 10.6z" fill="#1b7fd4"/></svg>
<span class="c" style="left:45.7px;width:99.3px;letter-spacing:0.21px">F 00000016</span>
<span class="c" style="left:146.7px;width:149.3px;letter-spacing:-0.29px">OUTI - OUTIRAMA</span>
<span class="c" style="left:297.7px;width:63.3px;letter-spacing:0.21px">21/07/2023</span>
<span class="c cr" style="left:362px;width:91.54px;letter-spacing:0.24px">425,00</span>
<span class="c cr" style="left:455px;width:93.54px;letter-spacing:0.24px">510,00</span>
<span class="c cr" style="left:645px;width:93.54px;letter-spacing:0.24px">510,00</span>
<span class="c cr" style="left:740px;width:93.48px;letter-spacing:0.18px">0,00</span>
<span class="c" style="left:835.7px;width:79.3px;letter-spacing:0.13px">Oui</span>
<span class="c" style="left:916.7px;width:79.3px;letter-spacing:0.13px">Oui</span>
<span class="c" style="left:997.7px;width:230.3px">BAR - Monsieur BARON Paul</span>
<span class="c" style="left:1233.0px;width:146.0px">-</span>
</div>
<div class="r o" style="top:466px;height:16px">
<svg class="fl" width="14" height="16" viewBox="0 0 14 16"><rect x="2" y="1" width="2" height="14" fill="#1b7fd4"/><path d="M5 1.2L13.6 6 5 10.6z" fill="#1b7fd4"/></svg>
<span class="c" style="left:45.7px;width:99.3px;letter-spacing:0.21px">F 00000017</span>
<span class="c" style="left:146.7px;width:149.3px">FRER - LES FRERES LUMIERE</span>
<span class="c" style="left:297.7px;width:63.3px;letter-spacing:0.21px">31/07/2023</span>
<span class="c cr" style="left:362px;width:91.54px;letter-spacing:0.24px">143,45</span>
<span class="c cr" style="left:455px;width:93.54px;letter-spacing:0.24px">172,14</span>
<span class="c cr" style="left:645px;width:93.54px;letter-spacing:0.24px">172,14</span>
<span class="c cr" style="left:740px;width:93.48px;letter-spacing:0.18px">0,00</span>
<span class="c" style="left:835.7px;width:79.3px;letter-spacing:0.13px">Oui</span>
<span class="c" style="left:916.7px;width:79.3px;letter-spacing:0.13px">Oui</span>
<span class="c" style="left:997.7px;width:230.3px;letter-spacing:-0.06px">LAMI - Monsieur LAMI Richard</span>
<span class="c" style="left:1233.0px;width:146.0px">-</span>
</div>
<div class="r e" style="top:482px;height:16px">
<svg class="fl" width="14" height="16" viewBox="0 0 14 16"><rect x="2" y="1" width="2" height="14" fill="#1b7fd4"/><path d="M5 1.2L13.6 6 5 10.6z" fill="#1b7fd4"/></svg>
<span class="c" style="left:45.7px;width:99.3px;letter-spacing:0.21px">F 00000018</span>
<span class="c" style="left:146.7px;width:149.3px;letter-spacing:-0.10px">AUCLOU - AU CLOU GEANT</span>
<span class="c" style="left:297.7px;width:63.3px;letter-spacing:0.21px">14/10/2023</span>
<span class="c cr" style="left:362px;width:91.54px;letter-spacing:0.24px">234,00</span>
<span class="c cr" style="left:455px;width:93.54px;letter-spacing:0.24px">280,80</span>
<span class="c cr" style="left:645px;width:93.54px;letter-spacing:0.24px">280,80</span>
<span class="c cr" style="left:740px;width:93.48px;letter-spacing:0.18px">0,00</span>
<span class="c" style="left:835.7px;width:79.3px;letter-spacing:0.13px">Oui</span>
<span class="c" style="left:916.7px;width:79.3px;letter-spacing:0.13px">Oui</span>
<span class="c" style="left:997.7px;width:230.3px">BAR - Monsieur BARON Paul</span>
<span class="c" style="left:1233.0px;width:146.0px">-</span>
</div>
<div class="r o" style="top:498px;height:16px">
<svg class="fl" width="14" height="16" viewBox="0 0 14 16"><rect x="2" y="1" width="2" height="14" fill="#1b7fd4"/><path d="M5 1.2L13.6 6 5 10.6z" fill="#1b7fd4"/></svg>
<span class="c" style="left:45.7px;width:99.3px;letter-spacing:0.21px">F 00000019</span>
<span class="c" style="left:146.7px;width:149.3px;letter-spacing:0.08px">ROUL - ROUL&amp;BILLE</span>
<span class="c" style="left:297.7px;width:63.3px;letter-spacing:0.21px">14/10/2023</span>
<span class="c cr" style="left:362px;width:91.54px;letter-spacing:0.24px">110,00</span>
<span class="c cr" style="left:455px;width:93.54px;letter-spacing:0.24px">132,00</span>
<span class="c cr" style="left:645px;width:93.54px;letter-spacing:0.24px">132,00</span>
<span class="c cr" style="left:740px;width:93.48px;letter-spacing:0.18px">0,00</span>
<span class="c" style="left:835.7px;width:79.3px;letter-spacing:0.13px">Oui</span>
<span class="c" style="left:916.7px;width:79.3px;letter-spacing:0.13px">Oui</span>
<span class="c" style="left:997.7px;width:230.3px;letter-spacing:-0.06px">LAMI - Monsieur LAMI Richard</span>
<span class="c" style="left:1233.0px;width:146.0px">-</span>
</div>
<div class="r e" style="top:514px;height:16px">
<svg class="fl" width="14" height="16" viewBox="0 0 14 16"><rect x="2" y="1" width="2" height="14" fill="#1b7fd4"/><path d="M5 1.2L13.6 6 5 10.6z" fill="#1b7fd4"/></svg>
<span class="c" style="left:45.7px;width:99.3px;letter-spacing:0.21px">F 00000020</span>
<span class="c" style="left:146.7px;width:149.3px;letter-spacing:-0.29px">OUTI - OUTIRAMA</span>
<span class="c" style="left:297.7px;width:63.3px;letter-spacing:0.21px">21/10/2023</span>
<span class="c cr" style="left:362px;width:91.54px;letter-spacing:0.24px">425,00</span>
<span class="c cr" style="left:455px;width:93.54px;letter-spacing:0.24px">510,00</span>
<span class="c cr" style="left:645px;width:93.54px;letter-spacing:0.24px">510,00</span>
<span class="c cr" style="left:740px;width:93.48px;letter-spacing:0.18px">0,00</span>
<span class="c" style="left:835.7px;width:79.3px;letter-spacing:0.13px">Oui</span>
<span class="c" style="left:916.7px;width:79.3px;letter-spacing:0.13px">Oui</span>
<span class="c" style="left:997.7px;width:230.3px">BAR - Monsieur BARON Paul</span>
<span class="c" style="left:1233.0px;width:146.0px">-</span>
</div>
<div class="r o" style="top:530px;height:16px">
<svg class="fl" width="14" height="16" viewBox="0 0 14 16"><rect x="2" y="1" width="2" height="14" fill="#1b7fd4"/><path d="M5 1.2L13.6 6 5 10.6z" fill="#1b7fd4"/></svg>
<span class="c" style="left:45.7px;width:99.3px;letter-spacing:0.21px">F 00000021</span>
<span class="c" style="left:146.7px;width:149.3px">FRER - LES FRERES LUMIERE</span>
<span class="c" style="left:297.7px;width:63.3px;letter-spacing:0.21px">26/10/2023</span>
<span class="c cr" style="left:362px;width:91.54px;letter-spacing:0.24px">143,45</span>
<span class="c cr" style="left:455px;width:93.54px;letter-spacing:0.24px">172,14</span>
<span class="c cr" style="left:645px;width:93.54px;letter-spacing:0.24px">172,14</span>
<span class="c cr" style="left:740px;width:93.48px;letter-spacing:0.18px">0,00</span>
<span class="c" style="left:835.7px;width:79.3px;letter-spacing:0.13px">Oui</span>
<span class="c" style="left:916.7px;width:79.3px;letter-spacing:0.13px">Oui</span>
<span class="c" style="left:997.7px;width:230.3px;letter-spacing:-0.06px">LAMI - Monsieur LAMI Richard</span>
<span class="c" style="left:1233.0px;width:146.0px">-</span>
</div>
<div class="r e" style="top:546px;height:16px">
<svg class="fl" width="14" height="16" viewBox="0 0 14 16"><rect x="2" y="1" width="2" height="14" fill="#1b7fd4"/><path d="M5 1.2L13.6 6 5 10.6z" fill="#1b7fd4"/></svg>
<span class="c" style="left:45.7px;width:99.3px;letter-spacing:0.21px">F 00000022</span>
<span class="c" style="left:146.7px;width:149.3px;letter-spacing:-0.10px">AUCLOU - AU CLOU GEANT</span>
<span class="c" style="left:297.7px;width:63.3px;letter-spacing:0.21px">18/01/2024</span>
<span class="c cr" style="left:362px;width:91.54px;letter-spacing:0.24px">473,85</span>
<span class="c cr" style="left:455px;width:93.54px;letter-spacing:0.24px">568,62</span>
<span class="c cr" style="left:645px;width:93.54px;letter-spacing:0.24px">568,62</span>
<span class="c cr" style="left:740px;width:93.48px;letter-spacing:0.18px">0,00</span>
<span class="c" style="left:835.7px;width:79.3px;letter-spacing:0.13px">Oui</span>
<span class="c" style="left:916.7px;width:79.3px;letter-spacing:0.13px">Oui</span>
<span class="c" style="left:997.7px;width:230.3px">BAR - Monsieur BARON Paul</span>
<span class="c" style="left:1229.7px;width:149.3px">MEND - Madame MENDES</span>
</div>
<div class="r o" style="top:562px;height:16px">
<svg class="fl" width="14" height="16" viewBox="0 0 14 16"><rect x="2" y="1" width="2" height="14" fill="#1b7fd4"/><path d="M5 1.2L13.6 6 5 10.6z" fill="#1b7fd4"/></svg>
<span class="c" style="left:45.7px;width:99.3px;letter-spacing:0.21px">F 00000023</span>
<span class="c" style="left:146.7px;width:149.3px;letter-spacing:-0.09px">BOIS - LE ROI DU BOIS</span>
<span class="c" style="left:297.7px;width:63.3px;letter-spacing:0.21px">21/01/2024</span>
<span class="c cr" style="left:362px;width:91.48px;letter-spacing:0.18px">8 083,98</span>
<span class="c cr" style="left:455px;width:93.48px;letter-spacing:0.18px">9 700,78</span>
<span class="c cr" style="left:645px;width:93.48px;letter-spacing:0.18px">9 700,78</span>
<span class="c cr" style="left:740px;width:93.48px;letter-spacing:0.18px">0,00</span>
<span class="c" style="left:835.7px;width:79.3px;letter-spacing:0.13px">Oui</span>
<span class="c" style="left:916.7px;width:79.3px;letter-spacing:0.13px">Oui</span>
<span class="c" style="left:997.7px;width:230.3px;letter-spacing:-0.06px">LAMI - Monsieur LAMI Richard</span>
<span class="c" style="left:1233.0px;width:146.0px">-</span>
</div>
<div class="r e" style="top:578px;height:16px">
<svg class="fl" width="14" height="16" viewBox="0 0 14 16"><rect x="2" y="1" width="2" height="14" fill="#1b7fd4"/><path d="M5 1.2L13.6 6 5 10.6z" fill="#1b7fd4"/></svg>
<span class="c" style="left:45.7px;width:99.3px;letter-spacing:0.21px">F 00000024</span>
<span class="c" style="left:146.7px;width:149.3px;letter-spacing:-0.29px">OUTI - OUTIRAMA</span>
<span class="c" style="left:297.7px;width:63.3px;letter-spacing:0.21px">21/01/2024</span>
<span class="c cr" style="left:362px;width:91.48px;letter-spacing:0.18px">6 621,21</span>
<span class="c cr" style="left:455px;width:93.48px;letter-spacing:0.18px">7 945,45</span>
<span class="c cr" style="left:645px;width:93.48px;letter-spacing:0.18px">7 945,45</span>
<span class="c cr" style="left:740px;width:93.48px;letter-spacing:0.18px">0,00</span>
<span class="c" style="left:835.7px;width:79.3px;letter-spacing:0.13px">Oui</span>
<span class="c" style="left:916.7px;width:79.3px;letter-spacing:0.13px">Oui</span>
<span class="c" style="left:997.7px;width:230.3px">BAR - Monsieur BARON Paul</span>
<span class="c" style="left:1229.7px;width:149.3px">MEND - Madame MENDES</span>
</div>
<div class="r o" style="top:594px;height:16px">
<svg class="fl" width="14" height="16" viewBox="0 0 14 16"><rect x="2" y="1" width="2" height="14" fill="#1b7fd4"/><path d="M5 1.2L13.6 6 5 10.6z" fill="#1b7fd4"/></svg>
<span class="c" style="left:45.7px;width:99.3px;letter-spacing:0.21px">F 00000025</span>
<span class="c" style="left:146.7px;width:149.3px">FRER - LES FRERES LUMIERE</span>
<span class="c" style="left:297.7px;width:63.3px;letter-spacing:0.21px">23/01/2024</span>
<span class="c cr" style="left:362px;width:91.48px;letter-spacing:0.18px">1 827,80</span>
<span class="c cr" style="left:455px;width:93.48px;letter-spacing:0.18px">2 193,36</span>
<span class="c cr" style="left:645px;width:93.48px;letter-spacing:0.18px">2 193,36</span>
<span class="c cr" style="left:740px;width:93.48px;letter-spacing:0.18px">0,00</span>
<span class="c" style="left:835.7px;width:79.3px;letter-spacing:0.13px">Oui</span>
<span class="c" style="left:916.7px;width:79.3px;letter-spacing:0.13px">Oui</span>
<span class="c" style="left:997.7px;width:230.3px;letter-spacing:-0.06px">LAMI - Monsieur LAMI Richard</span>
<span class="c" style="left:1233.0px;width:146.0px">-</span>
</div>
<div class="r e" style="top:610px;height:16px">
<svg class="fl" width="14" height="16" viewBox="0 0 14 16"><rect x="2" y="1" width="2" height="14" fill="#1b7fd4"/><path d="M5 1.2L13.6 6 5 10.6z" fill="#1b7fd4"/></svg>
<span class="c" style="left:45.7px;width:99.3px;letter-spacing:0.21px">F 00000026</span>
<span class="c" style="left:146.7px;width:149.3px;letter-spacing:0.08px">ROUL - ROUL&amp;BILLE</span>
<span class="c" style="left:297.7px;width:63.3px;letter-spacing:0.21px">23/01/2024</span>
<span class="c cr" style="left:362px;width:91.48px;letter-spacing:0.18px">1 645,50</span>
<span class="c cr" style="left:455px;width:93.48px;letter-spacing:0.18px">1 974,60</span>
<span class="c cr" style="left:645px;width:93.48px;letter-spacing:0.18px">1 974,60</span>
<span class="c cr" style="left:740px;width:93.48px;letter-spacing:0.18px">0,00</span>
<span class="c" style="left:835.7px;width:79.3px;letter-spacing:0.13px">Oui</span>
<span class="c" style="left:916.7px;width:79.3px;letter-spacing:0.13px">Oui</span>
<span class="c" style="left:997.7px;width:230.3px;letter-spacing:-0.06px">LAMI - Monsieur LAMI Richard</span>
<span class="c" style="left:1233.0px;width:146.0px">-</span>
</div>
<div class="r o" style="top:626px;height:16px">
<svg class="fl" width="14" height="16" viewBox="0 0 14 16"><rect x="2" y="1" width="2" height="14" fill="#1b7fd4"/><path d="M5 1.2L13.6 6 5 10.6z" fill="#1b7fd4"/></svg>
<span class="c" style="left:45.7px;width:99.3px;letter-spacing:0.21px">F 00000027</span>
<span class="c" style="left:146.7px;width:149.3px;letter-spacing:-0.29px">OUTI - OUTIRAMA</span>
<span class="c" style="left:297.7px;width:63.3px;letter-spacing:0.21px">11/02/2024</span>
<span class="c cr" style="left:362px;width:91.50px;letter-spacing:0.20px">32 547,00</span>
<span class="c cr" style="left:455px;width:93.50px;letter-spacing:0.20px">39 056,40</span>
<span class="c cr" style="left:645px;width:93.50px;letter-spacing:0.20px">39 056,40</span>
<span class="c cr" style="left:740px;width:93.48px;letter-spacing:0.18px">0,00</span>
<span class="c" style="left:835.7px;width:79.3px;letter-spacing:0.13px">Oui</span>
<span class="c" style="left:916.7px;width:79.3px;letter-spacing:0.13px">Oui</span>
<span class="c" style="left:997.7px;width:230.3px">BAR - Monsieur BARON Paul</span>
<span class="c" style="left:1229.7px;width:149.3px">MEND - Madame MENDES</span>
</div>
<div class="r e" style="top:642px;height:16px">
<svg class="fl" width="14" height="16" viewBox="0 0 14 16"><rect x="2" y="1" width="2" height="14" fill="#1b7fd4"/><path d="M5 1.2L13.6 6 5 10.6z" fill="#1b7fd4"/></svg>
<span class="c" style="left:45.7px;width:99.3px;letter-spacing:0.21px">F 00000028</span>
<span class="c" style="left:146.7px;width:149.3px">FRER - LES FRERES LUMIERE</span>
<span class="c" style="left:297.7px;width:63.3px;letter-spacing:0.21px">14/02/2024</span>
<span class="c cr" style="left:362px;width:91.48px;letter-spacing:0.18px">5 806,40</span>
<span class="c cr" style="left:455px;width:93.48px;letter-spacing:0.18px">6 978,70</span>
<span class="c cr" style="left:645px;width:93.48px;letter-spacing:0.18px">6 978,70</span>
<span class="c cr" style="left:740px;width:93.48px;letter-spacing:0.18px">0,00</span>
<span class="c" style="left:835.7px;width:79.3px;letter-spacing:0.13px">Oui</span>
<span class="c" style="left:916.7px;width:79.3px;letter-spacing:0.13px">Oui</span>
<span class="c" style="left:997.7px;width:230.3px;letter-spacing:-0.06px">LAMI - Monsieur LAMI Richard</span>
<span class="c" style="left:1233.0px;width:146.0px">-</span>
</div>
<div class="r o" style="top:658px;height:16px">
<svg class="fl" width="14" height="16" viewBox="0 0 14 16"><rect x="2" y="1" width="2" height="14" fill="#1b7fd4"/><path d="M5 1.2L13.6 6 5 10.6z" fill="#1b7fd4"/></svg>
<span class="c" style="left:45.7px;width:99.3px;letter-spacing:0.21px">F 00000029</span>
<span class="c" style="left:146.7px;width:149.3px;letter-spacing:0.08px">ROUL - ROUL&amp;BILLE</span>
<span class="c" style="left:297.7px;width:63.3px;letter-spacing:0.21px">18/02/2024</span>
<span class="c cr" style="left:362px;width:91.54px;letter-spacing:0.24px">630,00</span>
<span class="c cr" style="left:455px;width:93.54px;letter-spacing:0.24px">756,00</span>
<span class="c cr" style="left:645px;width:93.54px;letter-spacing:0.24px">756,00</span>
<span class="c cr" style="left:740px;width:93.48px;letter-spacing:0.18px">0,00</span>
<span class="c" style="left:835.7px;width:79.3px;letter-spacing:0.13px">Oui</span>
<span class="c" style="left:916.7px;width:79.3px;letter-spacing:0.13px">Oui</span>
<span class="c" style="left:997.7px;width:230.3px;letter-spacing:-0.06px">LAMI - Monsieur LAMI Richard</span>
<span class="c" style="left:1233.0px;width:146.0px">-</span>
</div>
<div class="r e" style="top:674px;height:16px">
<svg class="fl" width="14" height="16" viewBox="0 0 14 16"><rect x="2" y="1" width="2" height="14" fill="#1b7fd4"/><path d="M5 1.2L13.6 6 5 10.6z" fill="#1b7fd4"/></svg>
<span class="c" style="left:45.7px;width:99.3px;letter-spacing:0.21px">F 00000030</span>
<span class="c" style="left:146.7px;width:149.3px;letter-spacing:-0.29px">OUTI - OUTIRAMA</span>
<span class="c" style="left:297.7px;width:63.3px;letter-spacing:0.21px">04/03/2024</span>
<span class="c cr" style="left:362px;width:91.50px;letter-spacing:0.20px">25 069,24</span>
<span class="c cr" style="left:455px;width:93.50px;letter-spacing:0.20px">30 083,09</span>
<span class="c cr" style="left:645px;width:93.50px;letter-spacing:0.20px">30 083,09</span>
<span class="c cr" style="left:740px;width:93.48px;letter-spacing:0.18px">0,00</span>
<span class="c" style="left:835.7px;width:79.3px;letter-spacing:0.13px">Oui</span>
<span class="c" style="left:916.7px;width:79.3px;letter-spacing:0.13px">Oui</span>
<span class="c" style="left:997.7px;width:230.3px">BAR - Monsieur BARON Paul</span>
<span class="c" style="left:1229.7px;width:149.3px">MEND - Madame MENDES</span>
</div>
<div class="r o" style="top:690px;height:16px">
<svg class="fl" width="14" height="16" viewBox="0 0 14 16"><rect x="2" y="1" width="2" height="14" fill="#1b7fd4"/><path d="M5 1.2L13.6 6 5 10.6z" fill="#1b7fd4"/></svg>
<span class="c" style="left:45.7px;width:99.3px;letter-spacing:0.21px">F 00000031</span>
<span class="c" style="left:146.7px;width:149.3px">FRER - LES FRERES LUMIERE</span>
<span class="c" style="left:297.7px;width:63.3px;letter-spacing:0.21px">06/03/2024</span>
<span class="c cr" style="left:362px;width:91.48px;letter-spacing:0.18px">1 947,50</span>
<span class="c cr" style="left:455px;width:93.48px;letter-spacing:0.18px">2 341,01</span>
<span class="c cr" style="left:645px;width:93.48px;letter-spacing:0.18px">2 341,01</span>
<span class="c cr" style="left:740px;width:93.48px;letter-spacing:0.18px">0,00</span>
<span class="c" style="left:835.7px;width:79.3px;letter-spacing:0.13px">Oui</span>
<span class="c" style="left:916.7px;width:79.3px;letter-spacing:0.13px">Oui</span>
<span class="c" style="left:997.7px;width:230.3px;letter-spacing:-0.06px">LAMI - Monsieur LAMI Richard</span>
<span class="c" style="left:1233.0px;width:146.0px">-</span>
</div>
<div class="r e" style="top:706px;height:16px">
<svg class="fl" width="14" height="16" viewBox="0 0 14 16"><rect x="2" y="1" width="2" height="14" fill="#1b7fd4"/><path d="M5 1.2L13.6 6 5 10.6z" fill="#1b7fd4"/></svg>
<span class="c" style="left:45.7px;width:99.3px;letter-spacing:0.21px">F 00000032</span>
<span class="c" style="left:146.7px;width:149.3px;letter-spacing:0.08px">ROUL - ROUL&amp;BILLE</span>
<span class="c" style="left:297.7px;width:63.3px;letter-spacing:0.21px">07/03/2024</span>
<span class="c cr" style="left:362px;width:91.48px;letter-spacing:0.18px">7 790,00</span>
<span class="c cr" style="left:455px;width:93.48px;letter-spacing:0.18px">9 348,00</span>
<span class="c cr" style="left:645px;width:93.48px;letter-spacing:0.18px">9 348,00</span>
<span class="c cr" style="left:740px;width:93.48px;letter-spacing:0.18px">0,00</span>
<span class="c" style="left:835.7px;width:79.3px;letter-spacing:0.13px">Oui</span>
<span class="c" style="left:916.7px;width:79.3px;letter-spacing:0.13px">Oui</span>
<span class="c" style="left:997.7px;width:230.3px;letter-spacing:-0.06px">LAMI - Monsieur LAMI Richard</span>
<span class="c" style="left:1233.0px;width:146.0px">-</span>
</div>
<div class="r o" style="top:722px;height:17px">
<svg class="fl" width="14" height="16" viewBox="0 0 14 16"><rect x="2" y="1" width="2" height="14" fill="#1b7fd4"/><path d="M5 1.2L13.6 6 5 10.6z" fill="#1b7fd4"/></svg>
<span class="c" style="left:45.7px;width:99.3px;letter-spacing:0.21px">F 00000033</span>
<span class="c" style="left:146.7px;width:149.3px;letter-spacing:-0.29px">OUTI - OUTIRAMA</span>
<span class="c" style="left:297.7px;width:63.3px;letter-spacing:0.21px">01/04/2024</span>
<span class="c cr" style="left:362px;width:91.54px;letter-spacing:0.24px">499,00</span>
<span class="c cr" style="left:455px;width:93.54px;letter-spacing:0.24px">598,80</span>
<span class="c cr" style="left:645px;width:93.54px;letter-spacing:0.24px">598,80</span>
<span class="c cr" style="left:740px;width:93.48px;letter-spacing:0.18px">0,00</span>
<span class="c" style="left:835.7px;width:79.3px;letter-spacing:0.13px">Oui</span>
<span class="c" style="left:916.7px;width:79.3px;letter-spacing:0.13px">Oui</span>
<span class="c" style="left:997.7px;width:230.3px">BAR - Monsieur BARON Paul</span>
<span class="c" style="left:1229.7px;width:149.3px">MEND - Madame MENDES</span>
</div>
<div class="r e" style="top:739px;height:16px">
<svg class="fl" width="14" height="16" viewBox="0 0 14 16"><rect x="2" y="1" width="2" height="14" fill="#1b7fd4"/><path d="M5 1.2L13.6 6 5 10.6z" fill="#1b7fd4"/></svg>
<span class="c" style="left:45.7px;width:99.3px;letter-spacing:0.21px">F 00000035</span>
<span class="c" style="left:146.7px;width:149.3px;letter-spacing:-0.10px">AUCLOU - AU CLOU GEANT</span>
<span class="c" style="left:297.7px;width:63.3px;letter-spacing:0.21px">02/04/2024</span>
<span class="c cr" style="left:362px;width:91.48px;letter-spacing:0.18px">3 332,70</span>
<span class="c cr" style="left:455px;width:93.48px;letter-spacing:0.18px">3 999,24</span>
<span class="c cr" style="left:645px;width:93.48px;letter-spacing:0.18px">3 999,24</span>
<span class="c cr" style="left:740px;width:93.48px;letter-spacing:0.18px">0,00</span>
<span class="c" style="left:835.7px;width:79.3px;letter-spacing:0.13px">Oui</span>
<span class="c" style="left:916.7px;width:79.3px;letter-spacing:0.13px">Oui</span>
<span class="c" style="left:997.7px;width:230.3px">BAR - Monsieur BARON Paul</span>
<span class="c" style="left:1229.7px;width:149.3px">MEND - Madame MENDES</span>
</div>
<div class="r o" style="top:755px;height:16px">
<svg class="fl" width="14" height="16" viewBox="0 0 14 16"><rect x="2" y="1" width="2" height="14" fill="#1b7fd4"/><path d="M5 1.2L13.6 6 5 10.6z" fill="#1b7fd4"/></svg>
<span class="c" style="left:45.7px;width:99.3px;letter-spacing:0.21px">F 00000036</span>
<span class="c" style="left:146.7px;width:149.3px;letter-spacing:-0.10px">AUCLOU - AU CLOU GEANT</span>
<span class="c" style="left:297.7px;width:63.3px;letter-spacing:0.21px">26/05/2024</span>
<span class="c cr" style="left:362px;width:91.54px;letter-spacing:0.24px">909,54</span>
<span class="c cr" style="left:455px;width:93.48px;letter-spacing:0.18px">1 091,45</span>
<span class="c cr" style="left:645px;width:93.48px;letter-spacing:0.18px">1 091,45</span>
<span class="c cr" style="left:740px;width:93.48px;letter-spacing:0.18px">0,00</span>
<span class="c" style="left:835.7px;width:79.3px;letter-spacing:0.13px">Oui</span>
<span class="c" style="left:916.7px;width:79.3px;letter-spacing:0.13px">Oui</span>
<span class="c" style="left:997.7px;width:230.3px">BAR - Monsieur BARON Paul</span>
<span class="c" style="left:1229.7px;width:149.3px">MEND - Madame MENDES</span>
</div>
<div class="r e" style="top:771px;height:16px">
<svg class="fl" width="14" height="16" viewBox="0 0 14 16"><rect x="2" y="1" width="2" height="14" fill="#1b7fd4"/><path d="M5 1.2L13.6 6 5 10.6z" fill="#1b7fd4"/></svg>
<span class="c" style="left:45.7px;width:99.3px;letter-spacing:0.21px">F 00000034</span>
<span class="c" style="left:146.7px;width:149.3px;letter-spacing:-0.29px">OUTI - OUTIRAMA</span>
<span class="c" style="left:297.7px;width:63.3px;letter-spacing:0.21px">01/04/2024</span>
<span class="c cr" style="left:362px;width:91.51px;letter-spacing:0.21px">280 000,00</span>
<span class="c cr" style="left:455px;width:93.51px;letter-spacing:0.21px">336 000,00</span>
<span class="c cr" style="left:645px;width:93.51px;letter-spacing:0.21px">336 000,00</span>
<span class="c cr" style="left:740px;width:93.48px;letter-spacing:0.18px">0,00</span>
<span class="c" style="left:835.7px;width:79.3px;letter-spacing:0.13px">Oui</span>
<span class="c" style="left:916.7px;width:79.3px;letter-spacing:0.13px">Oui</span>
<span class="c" style="left:997.7px;width:230.3px">BAR - Monsieur BARON Paul</span>
<span class="c" style="left:1229.7px;width:149.3px">MEND - Madame MENDES</span>
</div>
<div class="r o" style="top:787px;height:16px">
<svg class="fl" width="14" height="16" viewBox="0 0 14 16"><rect x="2" y="1" width="2" height="14" fill="#1b7fd4"/><path d="M5 1.2L13.6 6 5 10.6z" fill="#1b7fd4"/></svg>
<span class="c" style="left:45.7px;width:99.3px;letter-spacing:0.21px">F 00000037</span>
<span class="c" style="left:146.7px;width:149.3px;letter-spacing:-0.10px">AUCLOU - AU CLOU GEANT</span>
<span class="c" style="left:297.7px;width:63.3px;letter-spacing:0.21px">20/09/2024</span>
<span class="c cr" style="left:362px;width:91.51px;letter-spacing:0.21px">16,02</span>
<span class="c cr" style="left:455px;width:93.51px;letter-spacing:0.21px">19,22</span>
<span class="c cr" style="left:645px;width:93.51px;letter-spacing:0.21px">19,22</span>
<span class="c cr" style="left:740px;width:93.48px;letter-spacing:0.18px">0,00</span>
<span class="c" style="left:835.7px;width:79.3px;letter-spacing:0.13px">Oui</span>
<span class="c" style="left:916.7px;width:79.3px;letter-spacing:0.13px">Oui</span>
<span class="c" style="left:997.7px;width:230.3px">BAR - Monsieur BARON Paul</span>
<span class="c" style="left:1229.7px;width:149.3px">MEND - Madame MENDES</span>
</div>
<div class="r e" style="top:803px;height:16px">
<svg class="fl" width="14" height="16" viewBox="0 0 14 16"><rect x="2" y="1" width="2" height="14" fill="#1b7fd4"/><path d="M5 1.2L13.6 6 5 10.6z" fill="#1b7fd4"/></svg>
<span class="c" style="left:45.7px;width:99.3px;letter-spacing:0.21px">F 00000038</span>
<span class="c" style="left:146.7px;width:149.3px;letter-spacing:-0.29px">OUTI - OUTIRAMA</span>
<span class="c" style="left:297.7px;width:63.3px;letter-spacing:0.21px">20/09/2024</span>
<span class="c cr" style="left:362px;width:91.51px;letter-spacing:0.21px">51,00</span>
<span class="c cr" style="left:455px;width:93.51px;letter-spacing:0.21px">61,81</span>
<span class="c cr" style="left:645px;width:93.51px;letter-spacing:0.21px">61,81</span>
<span class="c cr" style="left:740px;width:93.48px;letter-spacing:0.18px">0,00</span>
<span class="c" style="left:835.7px;width:79.3px;letter-spacing:0.13px">Oui</span>
<span class="c" style="left:916.7px;width:79.3px;letter-spacing:0.13px">Oui</span>
<span class="c" style="left:997.7px;width:230.3px">BAR - Monsieur BARON Paul</span>
<span class="c" style="left:1229.7px;width:149.3px">MEND - Madame MENDES</span>
</div>
<div class="r o" style="top:819px;height:16px">
<svg class="fl" width="14" height="16" viewBox="0 0 14 16"><rect x="2" y="1" width="2" height="14" fill="#ffd800"/><path d="M5 1.2L13.6 6 5 10.6z" fill="#ffd800"/></svg>
<span class="c" style="left:45.7px;width:99.3px;letter-spacing:0.21px">F 00000039</span>
<span class="c" style="left:146.7px;width:149.3px;letter-spacing:-0.09px">BOIS - LE ROI DU BOIS</span>
<span class="c" style="left:297.7px;width:63.3px;letter-spacing:0.21px">11/10/2024</span>
<span class="c cr" style="left:362px;width:91.54px;letter-spacing:0.24px">432,25</span>
<span class="c cr" style="left:455px;width:93.54px;letter-spacing:0.24px">518,70</span>
<span class="c cr" style="left:645px;width:93.48px;letter-spacing:0.18px">0,00</span>
<span class="c cr" style="left:740px;width:93.54px;letter-spacing:0.24px">518,70</span>
<span class="c" style="left:835.7px;width:79.3px;letter-spacing:0.13px">Oui</span>
<span class="c" style="left:916.7px;width:79.3px;letter-spacing:0.13px">Oui</span>
<span class="c" style="left:997.7px;width:230.3px;letter-spacing:-0.06px">LAMI - Monsieur LAMI Richard</span>
<span class="c" style="left:1233.0px;width:146.0px">-</span>
</div>
<div class="r e" style="top:835px;height:16px">
<svg class="fl" width="14" height="16" viewBox="0 0 14 16"><rect x="2" y="1" width="2" height="14" fill="#ffd800"/><path d="M5 1.2L13.6 6 5 10.6z" fill="#ffd800"/></svg>
<span class="c" style="left:45.7px;width:99.3px;letter-spacing:0.21px">F 00000040</span>
<span class="c" style="left:146.7px;width:149.3px;letter-spacing:-0.29px">OUTI - OUTIRAMA</span>
<span class="c" style="left:297.7px;width:63.3px;letter-spacing:0.21px">15/10/2024</span>
<span class="c cr" style="left:362px;width:91.54px;letter-spacing:0.24px">790,00</span>
<span class="c cr" style="left:455px;width:93.54px;letter-spacing:0.24px">948,00</span>
<span class="c cr" style="left:645px;width:93.48px;letter-spacing:0.18px">0,00</span>
<span class="c cr" style="left:740px;width:93.54px;letter-spacing:0.24px">948,00</span>
<span class="c" style="left:835.7px;width:79.3px;letter-spacing:0.13px">Oui</span>
<span class="c" style="left:916.7px;width:79.3px;letter-spacing:0.13px">Oui</span>
<span class="c" style="left:997.7px;width:230.3px">BAR - Monsieur BARON Paul</span>
<span class="c" style="left:1229.7px;width:149.3px">MEND - Madame MENDES</span>
</div>
<div class="r o" style="top:851px;height:16px">
<svg class="fl" width="14" height="16" viewBox="0 0 14 16"><rect x="2" y="1" width="2" height="14" fill="#ffd800"/><path d="M5 1.2L13.6 6 5 10.6z" fill="#ffd800"/></svg>
<span class="c" style="left:45.7px;width:99.3px;letter-spacing:0.21px">F 00000041</span>
<span class="c" style="left:146.7px;width:149.3px;letter-spacing:-0.29px">OUTI - OUTIRAMA</span>
<span class="c" style="left:297.7px;width:63.3px;letter-spacing:0.21px">18/10/2024</span>
<span class="c cr" style="left:362px;width:91.48px;letter-spacing:0.18px">3 800,00</span>
<span class="c cr" style="left:455px;width:93.48px;letter-spacing:0.18px">4 560,00</span>
<span class="c cr" style="left:645px;width:93.48px;letter-spacing:0.18px">0,00</span>
<span class="c cr" style="left:740px;width:93.48px;letter-spacing:0.18px">4 560,00</span>
<span class="c" style="left:835.7px;width:79.3px;letter-spacing:0.13px">Oui</span>
<span class="c" style="left:916.7px;width:79.3px;letter-spacing:0.35px">Non</span>
<span class="c" style="left:997.7px;width:230.3px">BAR - Monsieur BARON Paul</span>
<span class="c" style="left:1229.7px;width:149.3px">MEND - Madame MENDES</span>
</div>
<div class="r e" style="top:867px;height:16px">
<svg class="fl" width="14" height="16" viewBox="0 0 14 16"><rect x="2" y="1" width="2" height="14" fill="#ffd800"/><path d="M5 1.2L13.6 6 5 10.6z" fill="#ffd800"/></svg>
<span class="c" style="left:45.7px;width:99.3px;letter-spacing:0.21px">F 00000042</span>
<span class="c" style="left:146.7px;width:149.3px;letter-spacing:-0.29px">OUTI - OUTIRAMA</span>
<span class="c" style="left:297.7px;width:63.3px;letter-spacing:0.21px">19/10/2024</span>
<span class="c cr" style="left:362px;width:91.48px;letter-spacing:0.18px">2 700,00</span>
<span class="c cr" style="left:455px;width:93.48px;letter-spacing:0.18px">3 240,00</span>
<span class="c cr" style="left:645px;width:93.48px;letter-spacing:0.18px">0,00</span>
<span class="c cr" style="left:740px;width:93.48px;letter-spacing:0.18px">3 240,00</span>
<span class="c" style="left:835.7px;width:79.3px;letter-spacing:0.13px">Oui</span>
<span class="c" style="left:916.7px;width:79.3px;letter-spacing:0.35px">Non</span>
<span class="c" style="left:997.7px;width:230.3px">BAR - Monsieur BARON Paul</span>
<span class="c" style="left:1229.7px;width:149.3px">MEND - Madame MENDES</span>
</div>
<div class="r s" style="top:883px;height:16px">
<svg class="fl" width="14" height="16" viewBox="0 0 14 16"><rect x="2" y="1" width="2" height="14" fill="#3cc832"/><path d="M5 1.2L13.6 6 5 10.6z" fill="#3cc832"/></svg>
<span class="c" style="left:45.7px;width:99.3px;letter-spacing:0.21px">F 00000043</span>
<span class="c" style="left:146.7px;width:149.3px">FRER - LES FRERES LUMIERE</span>
<span class="c" style="left:297.7px;width:63.3px;letter-spacing:0.21px">21/10/2024</span>
<span class="c cr" style="left:362px;width:91.54px;letter-spacing:0.24px">760,00</span>
<span class="c cr" style="left:455px;width:93.54px;letter-spacing:0.24px">912,00</span>
<span class="c cr" style="left:645px;width:93.48px;letter-spacing:0.18px">0,00</span>
<span class="c cr" style="left:740px;width:93.54px;letter-spacing:0.24px">912,00</span>
<span class="c" style="left:835.7px;width:79.3px;letter-spacing:0.35px">Non</span>
<span class="c" style="left:916.7px;width:79.3px;letter-spacing:0.35px">Non</span>
<span class="c" style="left:997.7px;width:230.3px;letter-spacing:-0.06px">LAMI - Monsieur LAMI Richard</span>
<span class="c" style="left:1233.0px;width:146.0px">-</span>
</div>
<div class="vl" style="left:296px"></div>
<div class="vl" style="left:361px"></div>
<div class="vl" style="left:454px"></div>
<div class="vl" style="left:549px"></div>
<div class="vl" style="left:644px"></div>
<div class="vl" style="left:739px"></div>
<div class="vl" style="left:834px"></div>
<div class="vl" style="left:915px"></div>
<div class="vl" style="left:996px"></div>
<div class="vl" style="left:1228px"></div>
<div class="vl" style="left:1379px"></div>
</div><div id="gl"></div>
<div id="sbu"><svg width="15" height="15" viewBox="0 0 15 15"><path d="M4 9.500l3.500-3.500 3.500 3.500" fill="none" stroke="#505050" stroke-width="1.300"/></svg></div>
<div id="sbt"></div>
<div id="sbd"><svg width="15" height="15" viewBox="0 0 15 15"><path d="M4 6l3.500 3.500L11 6" fill="none" stroke="#505050" stroke-width="1.300"/></svg></div>
<!-- BUTTONS -->
<div id="bg"></div>
<div class="btn" style="left:8px;width:117px"><svg width="18" height="18" viewBox="0 0 18 18" style="left:-1px"><g transform="translate(6.5,7.5)"><circle r="4.6" fill="none" stroke="#3f88d8" stroke-width="3.4" stroke-dasharray="2.4 1.21"/><circle r="3.6" fill="#e6f0fb" stroke="#3f88d8" stroke-width="1.8"/><circle r="1.5" fill="#fff" stroke="#9cc2ec" stroke-width="0.6"/></g><g transform="translate(12.3,13)"><circle r="3.1" fill="none" stroke="#f59f1f" stroke-width="2.6" stroke-dasharray="1.7 0.73"/><circle r="2.4" fill="#ffe7b8" stroke="#f59f1f" stroke-width="1.4"/><circle r="0.9" fill="#fff"/></g></svg><span style="left:15px;letter-spacing:-0.07px">Voir</span></div>
<div class="btn hot" style="left:132px;width:117px"><svg width="18" height="18" viewBox="0 0 18 18"><circle cx="9.500" cy="9.200" r="7" fill="url(#gcr)" stroke="#3f8d14" stroke-width="1"/><circle cx="9.500" cy="9.200" r="5.900" fill="none" stroke="#b6e27a" stroke-width="0.700" opacity="0.800"/><path d="M9.500 5.200v8M5.500 9.200h8" stroke="#fff" stroke-width="2.300"/></svg><span style="left:20px;letter-spacing:0.22px">Créer</span></div>
<div class="btn" style="left:260px;width:117px"><svg width="18" height="18" viewBox="0 0 18 18"><path d="M1.500 16l1.300-4.300 9.600-9.600 3 3-9.600 9.600z" fill="#f6b443" stroke="#a7691c" stroke-width="0.800" stroke-linejoin="round"/><path d="M4.600 12.400l8.700-8.700" stroke="#fbd98c" stroke-width="1.100"/><path d="M11.600 2.900l3 3 1.300-1.300a1.200 1.200 0 0 0 0-1.600l-1.400-1.400a1.200 1.200 0 0 0-1.600 0z" fill="#e88ea0" stroke="#a8506a" stroke-width="0.700"/><path d="M1.500 16l1.300-4.300 3 3z" fill="#f7e3c2" stroke="#8a6a3a" stroke-width="0.600"/><path d="M1.500 16l0.500-1.600 1.100 1.100z" fill="#444"/></svg><span style="left:20px;letter-spacing:0.06px">Modifier</span></div>
<div class="btn" style="left:388px;width:110px"><svg width="18" height="18" viewBox="0 0 18 18"><path d="M4.400 7V4.800a3.100 3.100 0 0 1 6.200 0V7" fill="none" stroke="#8f8f8f" stroke-width="2.200"/><path d="M4.400 7V4.800a3.100 3.100 0 0 1 6.200 0V7" fill="none" stroke="#d9d9d9" stroke-width="0.900"/><rect x="1.800" y="6" width="10" height="10" rx="1" fill="url(#glk)" stroke="#b4770e" stroke-width="0.900"/><path d="M2.800 9h4M2.800 11h4M2.800 13h4" stroke="#ffe39a" stroke-width="0.800"/><path d="M6.800 9.200h4.400V6.700l5 4-5 4v-2.500H6.800z" fill="url(#gar)" stroke="#3f8a10" stroke-width="0.900" stroke-linejoin="round"/></svg><span style="left:20px;letter-spacing:0.11px"><u>V</u>alider</span></div>
<div class="btn" style="left:508px;width:117px"><svg width="18" height="18" viewBox="0 0 18 18"><rect x="3.700" y="6" width="11.500" height="10" fill="#e9ecea" stroke="#b9bdb6" stroke-width="0.700"/><path d="M1.700 8.300L9.400 1.800l7.700 6.500" fill="none" stroke="#b9551a" stroke-width="1.900" stroke-linejoin="miter"/><text x="9.400" y="10.300" text-anchor="middle" font-family="Liberation Sans, sans-serif" font-weight="bold" font-size="7.500" fill="#3a4656">$</text><rect x="4.800" y="11.300" width="9.300" height="3.600" rx="0.600" fill="#c23c14" stroke="#8a2408" stroke-width="0.600"/><path d="M6.300 12.500h2.200v1.600h-2.200zM10.400 12.500h2.200v1.600h-2.200z" fill="#f7c79a"/><path d="M2 16.100h2M15 16.100h2" stroke="#b9551a" stroke-width="0.900"/></svg><span style="left:20px;letter-spacing:-0.24px">Trf A<u>v</u>oir</span></div>
<div class="btn" style="left:636px;width:117px"><svg width="18" height="18" viewBox="0 0 18 18"><path d="M4.200 1.300h8.300l3.500 3.500v10.400a1 1 0 0 1-1 1H4.200a1 1 0 0 1-1-1V2.300a1 1 0 0 1 1-1z" fill="url(#gpdf)" stroke="#b8101a" stroke-width="0.800"/><path d="M12.500 1.300v3.500h3.500z" fill="#fbc6c8" stroke="#b8101a" stroke-width="0.600"/><path d="M5.200 14.500c2.200-2 4.200-5.800 3.900-8.600-0.500-1.300-1.700 0-0.900 2.600 0.900 2.300 3.100 4 5.300 4.400 1.600 0.100 1.200-1.400-1.200-1.200-2.300 0.200-5.400 1.400-7.100 2.800z" fill="none" stroke="#fff" stroke-width="0.950"/></svg><span style="left:20px;letter-spacing:-0.03px"><u>P</u>df Mail</span></div>
<div class="btn" style="left:762px;width:121px"><svg width="18" height="18" viewBox="0 0 18 18"><use href="#prn"/></svg><span style="left:20px;letter-spacing:0.35px">Imprimer</span></div>
<div class="btn" style="left:890px;width:121px"><svg width="18" height="18" viewBox="0 0 18 18"><use href="#prn2"/></svg><span style="left:20px;letter-spacing:0.20px">Impr. liste</span></div>
<div class="btn" style="left:1020px;width:121px"><svg width="18" height="18" viewBox="0 0 18 18"><use href="#prn2"/></svg><span style="left:20px;letter-spacing:0.09px">Impr. lot</span></div>
<div class="btn" style="left:1153px;width:121px"><svg width="18" height="18" viewBox="0 0 18 18"><path d="M1.900 3.500v11M16.200 3.500v11" stroke="#3f8fd6" stroke-width="0.900"/><path d="M1.400 1.200h15.300v2.600H1.400z" fill="#ff9a2e"/><path d="M2.200 2.900h13.700" stroke="#ffd4a0" stroke-width="0.700"/><rect x="4.200" y="4.700" width="9.800" height="8.200" fill="#8cc21a" stroke="#a9d64a" stroke-width="0.600"/><text x="9.100" y="11.300" font-size="6.500" font-family="Liberation Sans, sans-serif" font-weight="bold" fill="#fff" text-anchor="middle" letter-spacing="-0.300">10</text></svg><span style="left:20px;letter-spacing:0.31px"><u>E</u>chéances</span></div>
<div class="btn" style="left:1285px;width:121px"><svg width="18" height="18" viewBox="0 0 18 18"><rect x="5.300" y="2" width="11" height="14.500" rx="1.500" fill="#4a4d52" stroke="#2a2c30" stroke-width="0.800"/><rect x="6.300" y="3" width="9" height="12.500" rx="1" fill="none" stroke="#9a9da2" stroke-width="0.500"/><rect x="7.300" y="4" width="7.600" height="4.600" fill="url(#gscr)"/><path d="M13.200 9.400h1.600" stroke="#e0302a" stroke-width="1.100"/><path d="M7.500 11.200h7.200M7.500 12.900h7.200M7.500 14.500h7.200" stroke="#c4c7cc" stroke-width="1" stroke-dasharray="1.200 0.800"/><path d="M0.300 6.600h5.800V4.900l4.500 3.100-4.500 3.100V9.400H0.300z" fill="url(#gar)" stroke="#5a9a12" stroke-width="0.700" stroke-linejoin="round"/><linearGradient id="gscr" x1="0" y1="0" x2="0" y2="1"><stop offset="0" stop-color="#1c6fd0"/><stop offset="1" stop-color="#5ac0f6"/></linearGradient></svg><span style="left:20px;letter-spacing:-0.07px"><u>T</u>rf cpta</span></div>
<div class="btn dis" style="left:1418px;width:121px"><svg width="18" height="18" viewBox="0 0 18 18"><rect x="1.500" y="1.500" width="14" height="13.500" rx="2" fill="#f7f6fb" stroke="#b3abcf" stroke-width="1.100"/><path d="M2 4.600h13" stroke="#b3abcf" stroke-width="1.600"/><path d="M4.500 6.500v7.500M7.500 6.500v7.500M2.500 8.500h8M2.500 11h6" stroke="#cbc5de" stroke-width="1.100"/><circle cx="12.300" cy="11.800" r="4.300" fill="#fff" stroke="#b3abcf" stroke-width="1.100"/><path d="M12.300 9.200v2.700h2.300" fill="none" stroke="#222" stroke-width="1"/></svg><span style="left:20px;letter-spacing:0.29px"><u>R</u>égler</span></div>
<svg width="0" height="0" style="position:absolute"><defs>
<g id="prn"><rect x="5.300" y="1" width="8.600" height="5.500" rx="0.700" fill="#e4f1fd" stroke="#3f86d0" stroke-width="0.900"/><path d="M6.800 2.900h5.600" stroke="#b7d6f3" stroke-width="1"/><rect x="1.500" y="5.200" width="16" height="8" rx="1.300" fill="#ececec" stroke="#8e8e8e" stroke-width="0.800"/><rect x="3.200" y="6.600" width="12.600" height="2.600" fill="#757575"/><path d="M3.200 10.200h12.600" stroke="#b3b3b3" stroke-width="0.800"/><rect x="5.300" y="11.600" width="8.600" height="4.800" rx="0.700" fill="#eff7fe" stroke="#3f86d0" stroke-width="0.900"/></g>
<g id="prn2"><rect x="5" y="1" width="8.600" height="5.500" rx="0.700" fill="#e4f1fd" stroke="#3f86d0" stroke-width="0.900"/><path d="M6.500 2.900h5.600" stroke="#b7d6f3" stroke-width="1"/><rect x="1.300" y="5.200" width="15.800" height="7.600" rx="1.300" fill="#ececec" stroke="#8e8e8e" stroke-width="0.800"/><rect x="3" y="6.500" width="12.400" height="2" fill="#757575"/><rect x="5.300" y="8.800" width="9.300" height="8" rx="0.600" fill="#fff" stroke="#7c7c7c" stroke-width="0.900"/><path d="M7 10.600h3.600l-1.800 2zM7 13.400h3.600l-1.800 2z" fill="#3f9a1e"/><path d="M12 11.200h1.400M12 14h1.400" stroke="#b9b9b9" stroke-width="0.800" stroke-dasharray="0.600 0.500"/></g>
<radialGradient id="gcr" cx="0.5" cy="0.35" r="0.7"><stop offset="0" stop-color="#b2e424"/><stop offset="0.6" stop-color="#7cc40a"/><stop offset="1" stop-color="#4f9a06"/></radialGradient>
<linearGradient id="glk" x1="0" y1="0" x2="0" y2="1"><stop offset="0" stop-color="#ffd768"/><stop offset="1" stop-color="#f09a18"/></linearGradient>
<linearGradient id="gar" x1="0" y1="0" x2="0" y2="1"><stop offset="0" stop-color="#b8e860"/><stop offset="1" stop-color="#58b01c"/></linearGradient>
<linearGradient id="gpdf" x1="0" y1="0" x2="0" y2="1"><stop offset="0" stop-color="#d8141e"/><stop offset="1" stop-color="#f23a40"/></linearGradient>
</defs></svg>
<!-- mouse cursor -->
<svg class="abs" style="left:159px;top:935.7px;z-index:20" width="16" height="13" viewBox="0 0 16 13"><path d="M1.800 1.300v16.500l3.800-3.600 2.600 6 2.400-1-2.600-5.900h5.200z" fill="#fff" stroke="#000" stroke-width="1.100" stroke-linejoin="miter"/></svg>
</body>
</html>
